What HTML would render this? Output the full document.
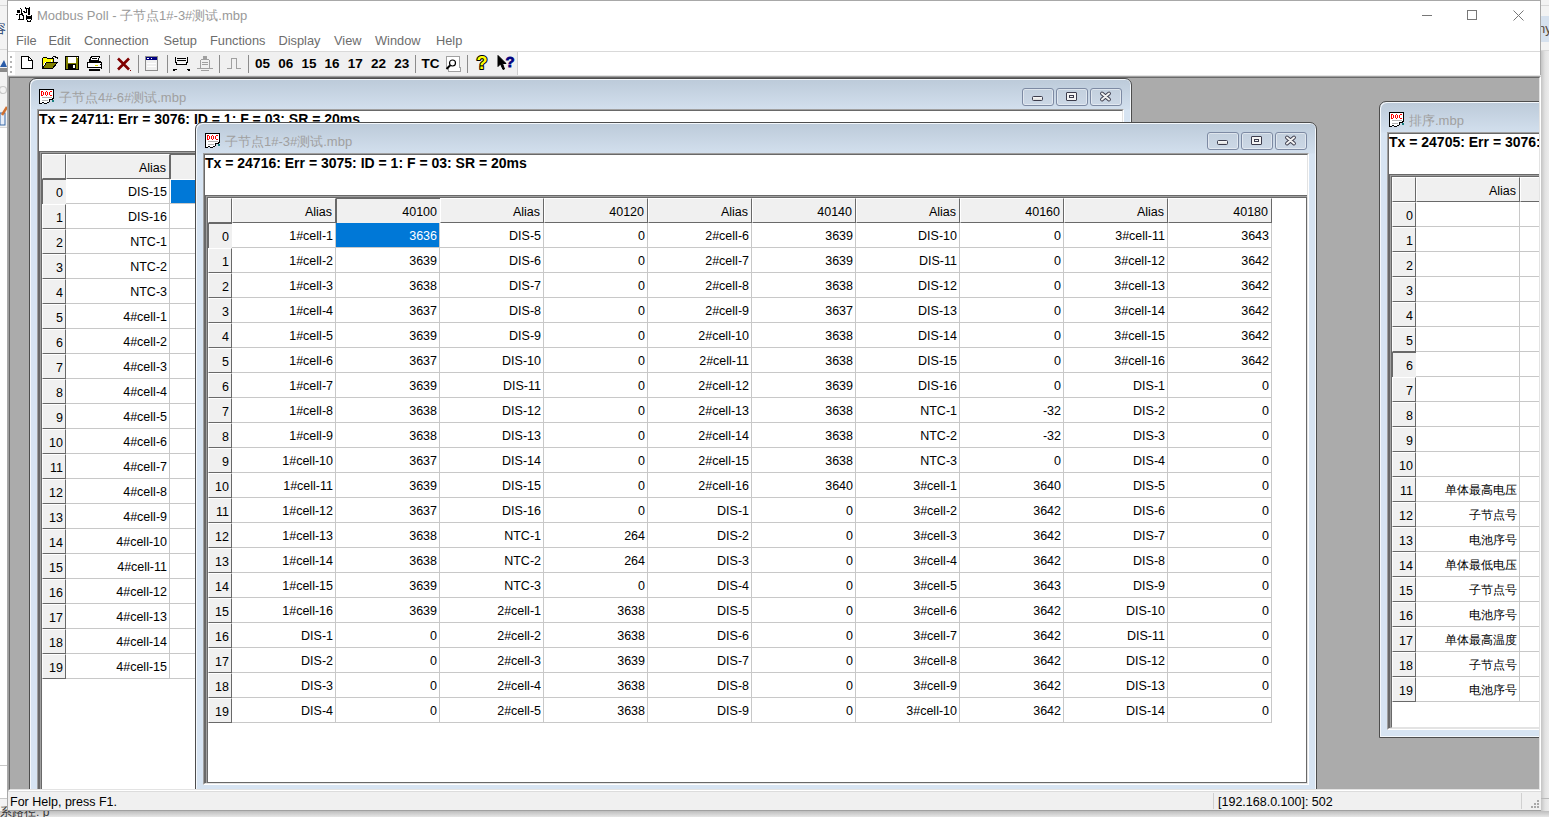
<!DOCTYPE html><html><head><meta charset="utf-8"><style>
*{margin:0;padding:0;box-sizing:border-box}
html,body{width:1549px;height:817px;overflow:hidden;background:#f0f0f0;font-family:"Liberation Sans",sans-serif}
div{position:absolute}
svg{position:absolute;overflow:visible}
.t{white-space:nowrap;line-height:14px}
.c{white-space:nowrap;line-height:14px;font-size:12.5px;color:#000;text-align:right}
.tx{white-space:nowrap;line-height:16px;font-size:14px;font-weight:bold;color:#000}
.btn{border:1px solid #7d8aa3;border-radius:3px;background:linear-gradient(#c3d0de,#ccd8e6);box-shadow:inset 0 0 0 1px rgba(255,255,255,.45)}
</style></head><body>
<div style="left:0px;top:0px;width:1549px;height:817px;background:#f3f3f3"></div>
<div style="left:0px;top:5px;width:7px;height:1px;background:#d8d8d8"></div>
<div style="left:0px;top:49px;width:7px;height:1px;background:#d8d8d8"></div>
<div style="left:0px;top:127px;width:7px;height:1px;background:#d8d8d8"></div>
<div style="left:0px;top:128px;width:7px;height:670px;background:#ffffff"></div>
<div style="left:0px;top:798px;width:7px;height:1px;background:#c8c8c8"></div>
<div style="left:0px;top:765px;width:7px;height:1px;background:#c8c8c8"></div>
<div class="t" style="left:-7px;top:22px;font-size:13px;color:#1a3a6a">容</div>
<svg width="7" height="14" style="left:0;top:59px"><path d="M0 8L4 1L7 8Z" fill="#2a5ca8"/><rect x="0" y="9" width="7" height="4" fill="#8c8c8c"/></svg>
<svg width="7" height="10" style="left:0;top:85px"><circle cx="3" cy="5" r="3.5" fill="none" stroke="#c8c8c8" stroke-width="1.2"/></svg>
<svg width="7" height="20" style="left:0;top:106px"><rect x="0" y="7" width="5" height="12" fill="#e8eef8" stroke="#3a6aa8"/><path d="M2 9L7 1" stroke="#d07030" stroke-width="2.5"/></svg>
<div style="left:1541px;top:5px;width:8px;height:1px;background:#d8d8d8"></div>
<div style="left:1541px;top:16px;width:8px;height:26px;background:#d6e1ee"></div>
<div style="left:1541px;top:50px;width:8px;height:1px;background:#d8d8d8"></div>
<div class="t" style="left:1538px;top:22px;font-size:13px;color:#5a4a3a">ny</div>
<div style="left:0px;top:811px;width:1549px;height:6px;background:linear-gradient(#bdbdbd,#e6e6e6)"></div>
<div class="t" style="left:0px;top:805px;font-size:12px;color:#333">系路径: p</div>
<div style="left:7px;top:0px;width:1534px;height:811px;background:#ffffff;border:1px solid #a8a8a8;border-bottom:none"></div>
<svg width="22" height="18" shape-rendering="crispEdges" style="left:12px;top:4px"><path d="M13 3h1v1h-1zM17 3h1v1h-1zM8 4h1v1h-1zM13 4h1v1h-1zM14 4h1v1h-1zM15 4h1v1h-1zM16 4h1v1h-1zM17 4h1v1h-1zM9 5h1v1h-1zM14 5h1v1h-1zM16 5h1v1h-1zM17 5h1v1h-1zM5 6h1v1h-1zM6 6h1v1h-1zM7 6h1v1h-1zM9 6h1v1h-1zM14 6h1v1h-1zM16 6h1v1h-1zM17 6h1v1h-1zM5 7h1v1h-1zM6 7h1v1h-1zM7 7h1v1h-1zM9 7h1v1h-1zM11 7h1v1h-1zM12 7h1v1h-1zM14 7h1v1h-1zM16 7h1v1h-1zM17 7h1v1h-1zM5 8h1v1h-1zM6 8h1v1h-1zM7 8h1v1h-1zM9 8h1v1h-1zM12 8h1v1h-1zM13 8h1v1h-1zM14 8h1v1h-1zM16 8h1v1h-1zM17 8h1v1h-1zM9 9h1v1h-1zM10 9h1v1h-1zM16 9h1v1h-1zM17 9h1v1h-1zM4 10h1v1h-1zM5 10h1v1h-1zM7 10h1v1h-1zM8 10h1v1h-1zM9 10h1v1h-1zM10 10h1v1h-1zM16 10h1v1h-1zM17 10h1v1h-1zM7 11h1v1h-1zM10 11h1v1h-1zM11 11h1v1h-1zM14 11h1v1h-1zM19 11h1v1h-1zM7 12h1v1h-1zM11 12h1v1h-1zM14 12h1v1h-1zM15 12h1v1h-1zM16 12h1v1h-1zM17 12h1v1h-1zM18 12h1v1h-1zM19 12h1v1h-1zM7 13h1v1h-1zM11 13h1v1h-1zM14 13h1v1h-1zM15 13h1v1h-1zM16 13h1v1h-1zM17 13h1v1h-1zM18 13h1v1h-1zM19 13h1v1h-1zM7 14h1v1h-1zM11 14h1v1h-1zM14 14h1v1h-1zM15 14h1v1h-1zM16 14h1v1h-1zM17 14h1v1h-1zM18 14h1v1h-1zM19 14h1v1h-1zM6 15h1v1h-1zM7 15h1v1h-1zM8 15h1v1h-1zM9 15h1v1h-1zM10 15h1v1h-1zM11 15h1v1h-1zM14 15h1v1h-1zM19 15h1v1h-1zM15 16h1v1h-1zM18 16h1v1h-1zM15 17h1v1h-1zM16 17h1v1h-1zM17 17h1v1h-1zM18 17h1v1h-1z" fill="#000"/></svg>
<div class="t" style="left:37px;top:9px;font-size:13px;color:#999999">Modbus Poll - 子节点1#-3#测试.mbp</div>
<div style="left:1422px;top:15px;width:10px;height:1px;background:#777"></div>
<div style="left:1467px;top:10px;width:10px;height:10px;border:1px solid #777"></div>
<svg width="11" height="11" style="left:1513px;top:10px"><path d="M0.5 0.5L10.5 10.5M10.5 0.5L0.5 10.5" stroke="#777" stroke-width="1"/></svg>
<div class="t" style="left:16px;top:34px;font-size:12.8px;color:#6d6d6d">File</div>
<div class="t" style="left:48.5px;top:34px;font-size:12.8px;color:#6d6d6d">Edit</div>
<div class="t" style="left:84px;top:34px;font-size:12.8px;color:#6d6d6d">Connection</div>
<div class="t" style="left:163.5px;top:34px;font-size:12.8px;color:#6d6d6d">Setup</div>
<div class="t" style="left:210px;top:34px;font-size:12.8px;color:#6d6d6d">Functions</div>
<div class="t" style="left:278.5px;top:34px;font-size:12.8px;color:#6d6d6d">Display</div>
<div class="t" style="left:334px;top:34px;font-size:12.8px;color:#6d6d6d">View</div>
<div class="t" style="left:375px;top:34px;font-size:12.8px;color:#6d6d6d">Window</div>
<div class="t" style="left:436px;top:34px;font-size:12.8px;color:#6d6d6d">Help</div>
<div style="left:8px;top:51px;width:1532px;height:1px;background:#d9d9d9"></div>
<div style="left:8px;top:52px;width:1532px;height:24px;background:#ffffff"></div>
<div style="left:15px;top:52px;width:503px;height:24px;background:#f0f0f0"></div>
<div style="left:517px;top:52px;width:1px;height:24px;background:#d0d0d0"></div>
<div style="left:10px;top:56px;width:2px;height:2px;background:#b4b4b4"></div><div style="left:10px;top:61px;width:2px;height:2px;background:#b4b4b4"></div><div style="left:10px;top:66px;width:2px;height:2px;background:#b4b4b4"></div><div style="left:10px;top:71px;width:2px;height:2px;background:#b4b4b4"></div><svg width="14" height="15" shape-rendering="crispEdges" style="left:20px;top:55px"><path d="M1.5 1.5H8.5L12.5 5.5V13.5H1.5Z" fill="#fff" stroke="#000"/><path d="M8.5 1.5V5.5H12.5" fill="none" stroke="#000"/></svg><svg width="18" height="15" shape-rendering="crispEdges" style="left:41px;top:55px"><path d="M1.5 13.5V3.5L3 2H5.5L6.5 3.5H12.5V6.5" fill="#ffff00" stroke="#000"/><path d="M2 12L5 7H10.5V4.5" fill="none" stroke="#fff" stroke-width="1"/><path d="M1.5 13.5L5.5 7.5H16.5L11.5 13.5Z" fill="#808000" stroke="#000"/><path d="M10.5 3.5Q12.5 0.5 15.5 2.5" fill="none" stroke="#000"/><path d="M14 1.5h3v3z" fill="#000"/></svg><svg width="16" height="16" shape-rendering="crispEdges" style="left:64px;top:55px"><rect x="1" y="1" width="14" height="14" fill="#000"/><rect x="2" y="2" width="12" height="12" fill="#808000"/><rect x="4" y="2" width="8" height="6" fill="#fff"/><rect x="4" y="9" width="8" height="5" fill="#000"/><rect x="9" y="10" width="2" height="3" fill="#fff"/><rect x="13" y="2" width="1" height="1" fill="#fff"/></svg><svg width="18" height="16" shape-rendering="crispEdges" style="left:86px;top:55px"><path d="M5.5 1.5H13.5L12 5.5H3.5Z" fill="#fff" stroke="#000"/><path d="M6 3.5H11" stroke="#000"/><path d="M1.5 7.5H15.5V12.5H1.5Z" fill="#fff" stroke="#000"/><path d="M2.5 5.5H14.5V7.5H2.5Z" fill="#000"/><path d="M3 14.5H13.5" stroke="#000" stroke-width="2"/><rect x="9" y="10" width="3" height="1" fill="#e0e000"/><path d="M14 6L16 8M14 9L16 11M14 12L16 14" stroke="#000"/></svg><div style="left:109px;top:55px;width:1px;height:18px;background:#8c8c8c"></div><div style="left:138px;top:55px;width:1px;height:18px;background:#8c8c8c"></div><div style="left:167px;top:55px;width:1px;height:18px;background:#8c8c8c"></div><div style="left:219px;top:55px;width:1px;height:18px;background:#8c8c8c"></div><div style="left:248px;top:55px;width:1px;height:18px;background:#8c8c8c"></div><div style="left:415px;top:55px;width:1px;height:18px;background:#8c8c8c"></div><div style="left:467px;top:55px;width:1px;height:18px;background:#8c8c8c"></div><svg width="16" height="15" shape-rendering="crispEdges" style="left:116px;top:57px"><path d="M2 1.5L13 12.5M13 1.5L2 12.5" stroke="#800000" stroke-width="2.6" shape-rendering="geometricPrecision"/><rect x="14" y="13" width="1" height="1" fill="#800000"/></svg><svg width="13" height="15" shape-rendering="crispEdges" style="left:145px;top:56px"><rect x="0.5" y="0.5" width="12" height="14" fill="#f0f0f0" stroke="#8c8c8c"/><rect x="1" y="1" width="11" height="3" fill="#000080"/><rect x="2" y="2" width="2" height="1" fill="#fff"/><rect x="6" y="2" width="1" height="1" fill="#fff"/><path d="M2 7.5H11M2 10.5H11" stroke="#fff"/></svg><svg width="18" height="17" shape-rendering="crispEdges" style="left:173px;top:55px"><path d="M2.5 1.5V7.5H3.5V9.5H13.5V7.5H14.5V1.5" fill="none" stroke="#000" stroke-width="1.3"/><path d="M4 3.5H13M4 5.5H13" stroke="#000"/><path d="M5 8.5H12" stroke="#fff"/><path d="M1 16V14.5H3.5M16 16V14.5H13.5" fill="none" stroke="#000" stroke-width="1.2"/></svg><svg width="18" height="17" shape-rendering="crispEdges" style="left:196px;top:55px"><rect x="7" y="1" width="4" height="3" fill="#a0a0a0"/><path d="M4.5 13.5V5.5L5.5 4.5H12.5L13.5 5.5V13.5Z" fill="#f0f0f0" stroke="#a0a0a0" stroke-width="1.3"/><path d="M6 7.5H12M6 9.5H12" stroke="#a0a0a0"/><path d="M1 13.5H17" stroke="#a0a0a0" stroke-width="1.3"/><path d="M5 15.5H13" stroke="#a0a0a0"/></svg><svg width="16" height="13" shape-rendering="crispEdges" style="left:226px;top:57px"><path d="M1 11.5H5.5V1.5H10.5V11.5H15" fill="none" stroke="#a0a0a0"/></svg><div class="t" style="left:255.0px;top:57px;font-size:13.5px;font-weight:bold;color:#000">05</div><div class="t" style="left:278.2px;top:57px;font-size:13.5px;font-weight:bold;color:#000">06</div><div class="t" style="left:301.4px;top:57px;font-size:13.5px;font-weight:bold;color:#000">15</div><div class="t" style="left:324.6px;top:57px;font-size:13.5px;font-weight:bold;color:#000">16</div><div class="t" style="left:347.8px;top:57px;font-size:13.5px;font-weight:bold;color:#000">17</div><div class="t" style="left:371.0px;top:57px;font-size:13.5px;font-weight:bold;color:#000">22</div><div class="t" style="left:394.2px;top:57px;font-size:13.5px;font-weight:bold;color:#000">23</div><div class="t" style="left:421.5px;top:57px;font-size:13.5px;font-weight:bold;color:#000">TC</div><svg width="17" height="17" shape-rendering="crispEdges" style="left:445px;top:56px"><path d="M1.5 0.5H14.5V11.5H15.5V15.5H3.5V11.5H1.5Z" fill="#fff" stroke="#a0a0a0"/><circle cx="7.5" cy="7" r="3" fill="#fff" stroke="#000" stroke-width="1.2" shape-rendering="geometricPrecision"/><path d="M5 9.5L1.5 13" stroke="#000" stroke-width="2" shape-rendering="geometricPrecision"/></svg><svg width="14" height="17" style="left:475px;top:54px"><text x="7" y="15" text-anchor="middle" font-family="Liberation Sans" font-weight="bold" font-size="18" fill="#ffff00" stroke="#000" stroke-width="2.2" paint-order="stroke" stroke-linejoin="round">?</text></svg><svg width="18" height="16" shape-rendering="crispEdges" style="left:497px;top:55px"><path d="M1 0.5V11.5L3.5 9L6 14.5L7.5 14L5.5 8.5H9Z" fill="#000" stroke="#000" stroke-width="1" shape-rendering="geometricPrecision"/></svg><svg width="10" height="17" style="left:505px;top:54px"><text x="5" y="13" text-anchor="middle" font-family="Liberation Sans" font-weight="bold" font-size="15" fill="#000080" stroke="#000080" stroke-width="0.8">?</text></svg>
<div style="left:8px;top:75px;width:1533px;height:1px;background:#e3e3e3"></div>
<div style="left:8px;top:76px;width:1533px;height:715px;background:#ababab;border-top:1px solid #a0a0a0;border-left:1px solid #a0a0a0;border-right:1px solid #fff;border-bottom:1px solid #fff"></div>
<div style="left:9px;top:77px;width:1531px;height:713px;border-top:1px solid #696969;border-left:1px solid #696969;border-right:1px solid #e3e3e3;border-bottom:1px solid #e3e3e3"></div>
<div style="left:10px;top:78px;width:1529px;height:711px;overflow:hidden"><div style="left:-10px;top:-78px;width:1549px;height:817px"><div style="left:0;top:0;width:1549px;height:817px"><div style="left:29px;top:78px;width:1103px;height:740px;border:1px solid #4d4d4d;border-radius:7px 7px 0 0;background:linear-gradient(#bccad9,#d2dfed 30px,#d7e4f2 31px,#d7e4f2);box-shadow:inset 1px 1px 0 #f4f8fc,inset -1px -1px 0 #f4f8fc"></div><svg width="16" height="16" shape-rendering="crispEdges" style="left:39px;top:89px"><path d="M1 0h1v1h-1zM1 1h1v1h-1zM1 2h1v1h-1zM1 3h1v1h-1zM1 4h1v1h-1zM1 5h1v1h-1zM1 6h1v1h-1zM1 7h1v1h-1zM1 8h1v1h-1zM1 9h1v1h-1zM1 10h1v1h-1zM1 11h1v1h-1zM1 12h1v1h-1zM1 13h1v1h-1zM2 0h1v1h-1zM2 1h1v1h-1zM2 2h1v1h-1zM2 3h1v1h-1zM2 4h1v1h-1zM2 5h1v1h-1zM2 6h1v1h-1zM2 7h1v1h-1zM2 8h1v1h-1zM2 9h1v1h-1zM2 10h1v1h-1zM2 11h1v1h-1zM2 12h1v1h-1zM2 13h1v1h-1zM3 0h1v1h-1zM3 1h1v1h-1zM3 2h1v1h-1zM3 3h1v1h-1zM3 4h1v1h-1zM3 5h1v1h-1zM3 6h1v1h-1zM3 7h1v1h-1zM3 8h1v1h-1zM3 9h1v1h-1zM3 10h1v1h-1zM3 11h1v1h-1zM3 12h1v1h-1zM4 0h1v1h-1zM4 1h1v1h-1zM4 2h1v1h-1zM4 3h1v1h-1zM4 4h1v1h-1zM4 5h1v1h-1zM4 6h1v1h-1zM4 7h1v1h-1zM4 8h1v1h-1zM4 9h1v1h-1zM4 10h1v1h-1zM4 11h1v1h-1zM4 12h1v1h-1zM5 0h1v1h-1zM5 1h1v1h-1zM5 2h1v1h-1zM5 3h1v1h-1zM5 4h1v1h-1zM5 5h1v1h-1zM5 6h1v1h-1zM5 7h1v1h-1zM5 8h1v1h-1zM5 9h1v1h-1zM5 10h1v1h-1zM5 11h1v1h-1zM5 12h1v1h-1zM5 13h1v1h-1zM6 0h1v1h-1zM6 1h1v1h-1zM6 2h1v1h-1zM6 3h1v1h-1zM6 4h1v1h-1zM6 5h1v1h-1zM6 6h1v1h-1zM6 7h1v1h-1zM6 8h1v1h-1zM6 9h1v1h-1zM6 10h1v1h-1zM6 11h1v1h-1zM6 12h1v1h-1zM6 13h1v1h-1zM7 0h1v1h-1zM7 1h1v1h-1zM7 2h1v1h-1zM7 3h1v1h-1zM7 4h1v1h-1zM7 5h1v1h-1zM7 6h1v1h-1zM7 7h1v1h-1zM7 8h1v1h-1zM7 9h1v1h-1zM7 10h1v1h-1zM7 11h1v1h-1zM7 12h1v1h-1zM7 13h1v1h-1zM8 0h1v1h-1zM8 1h1v1h-1zM8 2h1v1h-1zM8 3h1v1h-1zM8 4h1v1h-1zM8 5h1v1h-1zM8 6h1v1h-1zM8 7h1v1h-1zM8 8h1v1h-1zM8 9h1v1h-1zM8 10h1v1h-1zM8 11h1v1h-1zM8 12h1v1h-1zM9 0h1v1h-1zM9 1h1v1h-1zM9 2h1v1h-1zM9 3h1v1h-1zM9 4h1v1h-1zM9 5h1v1h-1zM9 6h1v1h-1zM9 7h1v1h-1zM9 8h1v1h-1zM9 9h1v1h-1zM9 10h1v1h-1zM9 11h1v1h-1zM9 12h1v1h-1zM10 0h1v1h-1zM10 1h1v1h-1zM10 2h1v1h-1zM10 3h1v1h-1zM10 4h1v1h-1zM10 5h1v1h-1zM10 6h1v1h-1zM10 7h1v1h-1zM10 8h1v1h-1zM10 9h1v1h-1zM11 0h1v1h-1zM11 1h1v1h-1zM11 2h1v1h-1zM11 3h1v1h-1zM11 4h1v1h-1zM11 5h1v1h-1zM11 6h1v1h-1zM11 7h1v1h-1zM11 8h1v1h-1zM11 9h1v1h-1zM12 0h1v1h-1zM12 1h1v1h-1zM12 2h1v1h-1zM12 3h1v1h-1zM12 4h1v1h-1zM12 5h1v1h-1zM12 6h1v1h-1zM12 7h1v1h-1zM12 8h1v1h-1zM12 9h1v1h-1zM13 0h1v1h-1zM13 1h1v1h-1zM13 2h1v1h-1zM13 3h1v1h-1zM13 4h1v1h-1zM13 5h1v1h-1zM13 6h1v1h-1zM13 7h1v1h-1zM13 8h1v1h-1z" fill="#fff"/><path d="M0 0h1v1h-1zM1 0h1v1h-1zM2 0h1v1h-1zM3 0h1v1h-1zM4 0h1v1h-1zM5 0h1v1h-1zM6 0h1v1h-1zM7 0h1v1h-1zM8 0h1v1h-1zM9 0h1v1h-1zM10 0h1v1h-1zM11 0h1v1h-1zM12 0h1v1h-1zM13 0h1v1h-1zM14 0h1v1h-1zM0 1h1v1h-1zM0 2h1v1h-1zM0 3h1v1h-1zM0 4h1v1h-1zM0 5h1v1h-1zM0 6h1v1h-1zM0 7h1v1h-1zM0 8h1v1h-1zM0 9h1v1h-1zM0 10h1v1h-1zM0 11h1v1h-1zM0 12h1v1h-1zM0 13h1v1h-1zM0 14h1v1h-1zM14 1h1v1h-1zM14 2h1v1h-1zM14 3h1v1h-1zM14 4h1v1h-1zM14 5h1v1h-1zM14 6h1v1h-1zM14 7h1v1h-1zM14 8h1v1h-1zM14 9h1v1h-1zM13 9h1v1h-1zM10 10h1v1h-1zM11 10h1v1h-1zM12 10h1v1h-1zM13 10h1v1h-1zM10 11h1v1h-1zM10 12h1v1h-1zM3 13h1v1h-1zM4 13h1v1h-1zM8 13h1v1h-1zM9 13h1v1h-1zM0 14h1v1h-1zM1 14h1v1h-1zM2 14h1v1h-1zM5 14h1v1h-1zM6 14h1v1h-1zM7 14h1v1h-1z" fill="#000"/><path d="M2 2h1v1h-1zM2 3h1v1h-1zM2 4h1v1h-1zM2 5h1v1h-1zM2 6h1v1h-1zM3 2h1v1h-1zM3 6h1v1h-1zM4 3h1v1h-1zM4 4h1v1h-1zM4 5h1v1h-1zM6 3h1v1h-1zM6 4h1v1h-1zM6 5h1v1h-1zM7 2h1v1h-1zM7 6h1v1h-1zM8 3h1v1h-1zM8 4h1v1h-1zM8 5h1v1h-1zM10 3h1v1h-1zM10 4h1v1h-1zM10 5h1v1h-1zM11 2h1v1h-1zM12 2h1v1h-1zM11 6h1v1h-1zM12 6h1v1h-1z" fill="#ff0000"/><path d="M3 8h1v1h-1zM4 8h1v1h-1zM5 8h1v1h-1zM6 8h1v1h-1zM7 8h1v1h-1zM8 8h1v1h-1zM9 8h1v1h-1zM10 8h1v1h-1zM11 8h1v1h-1zM12 8h1v1h-1zM3 11h1v1h-1zM4 11h1v1h-1zM5 11h1v1h-1zM6 11h1v1h-1zM7 11h1v1h-1zM8 11h1v1h-1z" fill="#b4b4b4"/><path d="M13 11h1v1h-1zM14 11h1v1h-1zM13 12h1v1h-1zM14 12h1v1h-1z" fill="#1a8080"/></svg><div class="t" style="left:59px;top:91px;font-size:13px;color:#a0a0a0">子节点4#-6#测试.mbp</div><div class="btn" style="left:1022px;top:88px;width:32px;height:18px;"></div><div style="left:1032px;top:96px;width:11px;height:5px;background:linear-gradient(#fafafa,#dcdcdc);border:1px solid #3c3c4c;border-radius:1.5px"></div><div class="btn" style="left:1056px;top:88px;width:32px;height:18px;"></div><div style="left:1066px;top:92px;width:11px;height:9px;background:#f4f4f4;border:1px solid #3c3c4c;border-radius:1px"></div><div style="left:1069px;top:95px;width:5px;height:3px;border:1px solid #3c3c4c"></div><div class="btn" style="left:1090px;top:88px;width:32px;height:18px;"></div><svg width="11" height="9" style="left:1100px;top:92px"><path d="M2 1.5L9 7.5M9 1.5L2 7.5" stroke="#3c3c4c" stroke-width="3.8" stroke-linecap="round"/><path d="M2 1.5L9 7.5M9 1.5L2 7.5" stroke="#f2f2f2" stroke-width="2" stroke-linecap="round"/></svg><div style="left:37px;top:109px;width:1087px;height:701px;background:#fff;border-top:1px solid #a0a0a0;border-left:1px solid #a0a0a0;border-right:1px solid #fff;border-bottom:1px solid #fff"></div><div style="left:38px;top:110px;width:1085px;height:699px;background:#fff;border-top:1px solid #696969;border-left:1px solid #696969;border-right:1px solid #e3e3e3;border-bottom:1px solid #e3e3e3"></div><div class="tx" style="left:39px;top:111px">Tx = 24711: Err = 3076: ID = 1: F = 03: SR = 20ms</div><div style="left:39px;top:151px;width:1083px;height:657px;border-top:1px solid #696969;border-left:1px solid #696969"></div><div style="left:40px;top:152px;width:1082px;height:656px;border-top:1px solid #a0a0a0;border-left:1px solid #a0a0a0"></div><div style="left:41px;top:153px;width:1081px;height:655px;border-top:1px solid #696969;border-left:1px solid #696969;border-right:1px solid #e3e3e3;border-bottom:1px solid #e3e3e3"></div><div style="left:42px;top:154px;width:24px;height:25px;background:#f0f0f0;border-top:1px solid #fff;border-left:1px solid #fff;border-right:1px solid #696969;border-bottom:1px solid #696969"></div><div style="left:66px;top:154px;width:104px;height:25px;background:#f0f0f0;border-top:1px solid #fff;border-left:1px solid #fff;border-right:1px solid #696969;border-bottom:1px solid #696969"><div class="c" style="right:3px;top:6px">Alias</div></div><div style="left:170px;top:154px;width:104px;height:25px;background:#f0f0f0;border-top:1px solid #696969;border-left:1px solid #696969"></div><div style="left:274px;top:154px;width:104px;height:25px;background:#f0f0f0;border-top:1px solid #fff;border-left:1px solid #fff;border-right:1px solid #696969;border-bottom:1px solid #696969"><div class="c" style="right:3px;top:6px">Alias</div></div><div style="left:378px;top:154px;width:104px;height:25px;background:#f0f0f0;border-top:1px solid #fff;border-left:1px solid #fff;border-right:1px solid #696969;border-bottom:1px solid #696969"></div><div style="left:482px;top:154px;width:104px;height:25px;background:#f0f0f0;border-top:1px solid #fff;border-left:1px solid #fff;border-right:1px solid #696969;border-bottom:1px solid #696969"></div><div style="left:586px;top:154px;width:104px;height:25px;background:#f0f0f0;border-top:1px solid #fff;border-left:1px solid #fff;border-right:1px solid #696969;border-bottom:1px solid #696969"></div><div style="left:690px;top:154px;width:104px;height:25px;background:#f0f0f0;border-top:1px solid #fff;border-left:1px solid #fff;border-right:1px solid #696969;border-bottom:1px solid #696969"></div><div style="left:794px;top:154px;width:104px;height:25px;background:#f0f0f0;border-top:1px solid #fff;border-left:1px solid #fff;border-right:1px solid #696969;border-bottom:1px solid #696969"></div><div style="left:898px;top:154px;width:104px;height:25px;background:#f0f0f0;border-top:1px solid #fff;border-left:1px solid #fff;border-right:1px solid #696969;border-bottom:1px solid #696969"></div><div style="left:1002px;top:154px;width:104px;height:25px;background:#f0f0f0;border-top:1px solid #fff;border-left:1px solid #fff;border-right:1px solid #696969;border-bottom:1px solid #696969"></div><div style="left:42px;top:179px;width:24px;height:25px;background:#f0f0f0;border-top:1px solid #696969;border-left:1px solid #696969"><div class="c" style="right:3px;top:6px">0</div></div><div style="left:66px;top:179px;width:104px;height:25px;background:#fff;border-right:1px solid #c8c8c8;border-bottom:1px solid #c8c8c8"><div class="c" style="right:2px;top:6px;">DIS-15</div></div><div style="left:170px;top:179px;width:104px;height:25px;background:#0078d7;border-right:1px solid #c8c8c8;border-bottom:1px solid #c8c8c8;box-shadow:inset 1px 1px 0 #fff"></div><div style="left:274px;top:179px;width:104px;height:25px;background:#fff;border-right:1px solid #c8c8c8;border-bottom:1px solid #c8c8c8"></div><div style="left:378px;top:179px;width:104px;height:25px;background:#fff;border-right:1px solid #c8c8c8;border-bottom:1px solid #c8c8c8"></div><div style="left:482px;top:179px;width:104px;height:25px;background:#fff;border-right:1px solid #c8c8c8;border-bottom:1px solid #c8c8c8"></div><div style="left:586px;top:179px;width:104px;height:25px;background:#fff;border-right:1px solid #c8c8c8;border-bottom:1px solid #c8c8c8"></div><div style="left:690px;top:179px;width:104px;height:25px;background:#fff;border-right:1px solid #c8c8c8;border-bottom:1px solid #c8c8c8"></div><div style="left:794px;top:179px;width:104px;height:25px;background:#fff;border-right:1px solid #c8c8c8;border-bottom:1px solid #c8c8c8"></div><div style="left:898px;top:179px;width:104px;height:25px;background:#fff;border-right:1px solid #c8c8c8;border-bottom:1px solid #c8c8c8"></div><div style="left:1002px;top:179px;width:104px;height:25px;background:#fff;border-right:1px solid #c8c8c8;border-bottom:1px solid #c8c8c8"></div><div style="left:42px;top:204px;width:24px;height:25px;background:#f0f0f0;border-top:1px solid #fff;border-left:1px solid #fff;border-right:1px solid #696969;border-bottom:1px solid #696969"><div class="c" style="right:2px;top:6px">1</div></div><div style="left:66px;top:204px;width:104px;height:25px;background:#fff;border-right:1px solid #c8c8c8;border-bottom:1px solid #c8c8c8"><div class="c" style="right:2px;top:6px;">DIS-16</div></div><div style="left:170px;top:204px;width:104px;height:25px;background:#fff;border-right:1px solid #c8c8c8;border-bottom:1px solid #c8c8c8"></div><div style="left:274px;top:204px;width:104px;height:25px;background:#fff;border-right:1px solid #c8c8c8;border-bottom:1px solid #c8c8c8"></div><div style="left:378px;top:204px;width:104px;height:25px;background:#fff;border-right:1px solid #c8c8c8;border-bottom:1px solid #c8c8c8"></div><div style="left:482px;top:204px;width:104px;height:25px;background:#fff;border-right:1px solid #c8c8c8;border-bottom:1px solid #c8c8c8"></div><div style="left:586px;top:204px;width:104px;height:25px;background:#fff;border-right:1px solid #c8c8c8;border-bottom:1px solid #c8c8c8"></div><div style="left:690px;top:204px;width:104px;height:25px;background:#fff;border-right:1px solid #c8c8c8;border-bottom:1px solid #c8c8c8"></div><div style="left:794px;top:204px;width:104px;height:25px;background:#fff;border-right:1px solid #c8c8c8;border-bottom:1px solid #c8c8c8"></div><div style="left:898px;top:204px;width:104px;height:25px;background:#fff;border-right:1px solid #c8c8c8;border-bottom:1px solid #c8c8c8"></div><div style="left:1002px;top:204px;width:104px;height:25px;background:#fff;border-right:1px solid #c8c8c8;border-bottom:1px solid #c8c8c8"></div><div style="left:42px;top:229px;width:24px;height:25px;background:#f0f0f0;border-top:1px solid #fff;border-left:1px solid #fff;border-right:1px solid #696969;border-bottom:1px solid #696969"><div class="c" style="right:2px;top:6px">2</div></div><div style="left:66px;top:229px;width:104px;height:25px;background:#fff;border-right:1px solid #c8c8c8;border-bottom:1px solid #c8c8c8"><div class="c" style="right:2px;top:6px;">NTC-1</div></div><div style="left:170px;top:229px;width:104px;height:25px;background:#fff;border-right:1px solid #c8c8c8;border-bottom:1px solid #c8c8c8"></div><div style="left:274px;top:229px;width:104px;height:25px;background:#fff;border-right:1px solid #c8c8c8;border-bottom:1px solid #c8c8c8"></div><div style="left:378px;top:229px;width:104px;height:25px;background:#fff;border-right:1px solid #c8c8c8;border-bottom:1px solid #c8c8c8"></div><div style="left:482px;top:229px;width:104px;height:25px;background:#fff;border-right:1px solid #c8c8c8;border-bottom:1px solid #c8c8c8"></div><div style="left:586px;top:229px;width:104px;height:25px;background:#fff;border-right:1px solid #c8c8c8;border-bottom:1px solid #c8c8c8"></div><div style="left:690px;top:229px;width:104px;height:25px;background:#fff;border-right:1px solid #c8c8c8;border-bottom:1px solid #c8c8c8"></div><div style="left:794px;top:229px;width:104px;height:25px;background:#fff;border-right:1px solid #c8c8c8;border-bottom:1px solid #c8c8c8"></div><div style="left:898px;top:229px;width:104px;height:25px;background:#fff;border-right:1px solid #c8c8c8;border-bottom:1px solid #c8c8c8"></div><div style="left:1002px;top:229px;width:104px;height:25px;background:#fff;border-right:1px solid #c8c8c8;border-bottom:1px solid #c8c8c8"></div><div style="left:42px;top:254px;width:24px;height:25px;background:#f0f0f0;border-top:1px solid #fff;border-left:1px solid #fff;border-right:1px solid #696969;border-bottom:1px solid #696969"><div class="c" style="right:2px;top:6px">3</div></div><div style="left:66px;top:254px;width:104px;height:25px;background:#fff;border-right:1px solid #c8c8c8;border-bottom:1px solid #c8c8c8"><div class="c" style="right:2px;top:6px;">NTC-2</div></div><div style="left:170px;top:254px;width:104px;height:25px;background:#fff;border-right:1px solid #c8c8c8;border-bottom:1px solid #c8c8c8"></div><div style="left:274px;top:254px;width:104px;height:25px;background:#fff;border-right:1px solid #c8c8c8;border-bottom:1px solid #c8c8c8"></div><div style="left:378px;top:254px;width:104px;height:25px;background:#fff;border-right:1px solid #c8c8c8;border-bottom:1px solid #c8c8c8"></div><div style="left:482px;top:254px;width:104px;height:25px;background:#fff;border-right:1px solid #c8c8c8;border-bottom:1px solid #c8c8c8"></div><div style="left:586px;top:254px;width:104px;height:25px;background:#fff;border-right:1px solid #c8c8c8;border-bottom:1px solid #c8c8c8"></div><div style="left:690px;top:254px;width:104px;height:25px;background:#fff;border-right:1px solid #c8c8c8;border-bottom:1px solid #c8c8c8"></div><div style="left:794px;top:254px;width:104px;height:25px;background:#fff;border-right:1px solid #c8c8c8;border-bottom:1px solid #c8c8c8"></div><div style="left:898px;top:254px;width:104px;height:25px;background:#fff;border-right:1px solid #c8c8c8;border-bottom:1px solid #c8c8c8"></div><div style="left:1002px;top:254px;width:104px;height:25px;background:#fff;border-right:1px solid #c8c8c8;border-bottom:1px solid #c8c8c8"></div><div style="left:42px;top:279px;width:24px;height:25px;background:#f0f0f0;border-top:1px solid #fff;border-left:1px solid #fff;border-right:1px solid #696969;border-bottom:1px solid #696969"><div class="c" style="right:2px;top:6px">4</div></div><div style="left:66px;top:279px;width:104px;height:25px;background:#fff;border-right:1px solid #c8c8c8;border-bottom:1px solid #c8c8c8"><div class="c" style="right:2px;top:6px;">NTC-3</div></div><div style="left:170px;top:279px;width:104px;height:25px;background:#fff;border-right:1px solid #c8c8c8;border-bottom:1px solid #c8c8c8"></div><div style="left:274px;top:279px;width:104px;height:25px;background:#fff;border-right:1px solid #c8c8c8;border-bottom:1px solid #c8c8c8"></div><div style="left:378px;top:279px;width:104px;height:25px;background:#fff;border-right:1px solid #c8c8c8;border-bottom:1px solid #c8c8c8"></div><div style="left:482px;top:279px;width:104px;height:25px;background:#fff;border-right:1px solid #c8c8c8;border-bottom:1px solid #c8c8c8"></div><div style="left:586px;top:279px;width:104px;height:25px;background:#fff;border-right:1px solid #c8c8c8;border-bottom:1px solid #c8c8c8"></div><div style="left:690px;top:279px;width:104px;height:25px;background:#fff;border-right:1px solid #c8c8c8;border-bottom:1px solid #c8c8c8"></div><div style="left:794px;top:279px;width:104px;height:25px;background:#fff;border-right:1px solid #c8c8c8;border-bottom:1px solid #c8c8c8"></div><div style="left:898px;top:279px;width:104px;height:25px;background:#fff;border-right:1px solid #c8c8c8;border-bottom:1px solid #c8c8c8"></div><div style="left:1002px;top:279px;width:104px;height:25px;background:#fff;border-right:1px solid #c8c8c8;border-bottom:1px solid #c8c8c8"></div><div style="left:42px;top:304px;width:24px;height:25px;background:#f0f0f0;border-top:1px solid #fff;border-left:1px solid #fff;border-right:1px solid #696969;border-bottom:1px solid #696969"><div class="c" style="right:2px;top:6px">5</div></div><div style="left:66px;top:304px;width:104px;height:25px;background:#fff;border-right:1px solid #c8c8c8;border-bottom:1px solid #c8c8c8"><div class="c" style="right:2px;top:6px;">4#cell-1</div></div><div style="left:170px;top:304px;width:104px;height:25px;background:#fff;border-right:1px solid #c8c8c8;border-bottom:1px solid #c8c8c8"></div><div style="left:274px;top:304px;width:104px;height:25px;background:#fff;border-right:1px solid #c8c8c8;border-bottom:1px solid #c8c8c8"></div><div style="left:378px;top:304px;width:104px;height:25px;background:#fff;border-right:1px solid #c8c8c8;border-bottom:1px solid #c8c8c8"></div><div style="left:482px;top:304px;width:104px;height:25px;background:#fff;border-right:1px solid #c8c8c8;border-bottom:1px solid #c8c8c8"></div><div style="left:586px;top:304px;width:104px;height:25px;background:#fff;border-right:1px solid #c8c8c8;border-bottom:1px solid #c8c8c8"></div><div style="left:690px;top:304px;width:104px;height:25px;background:#fff;border-right:1px solid #c8c8c8;border-bottom:1px solid #c8c8c8"></div><div style="left:794px;top:304px;width:104px;height:25px;background:#fff;border-right:1px solid #c8c8c8;border-bottom:1px solid #c8c8c8"></div><div style="left:898px;top:304px;width:104px;height:25px;background:#fff;border-right:1px solid #c8c8c8;border-bottom:1px solid #c8c8c8"></div><div style="left:1002px;top:304px;width:104px;height:25px;background:#fff;border-right:1px solid #c8c8c8;border-bottom:1px solid #c8c8c8"></div><div style="left:42px;top:329px;width:24px;height:25px;background:#f0f0f0;border-top:1px solid #fff;border-left:1px solid #fff;border-right:1px solid #696969;border-bottom:1px solid #696969"><div class="c" style="right:2px;top:6px">6</div></div><div style="left:66px;top:329px;width:104px;height:25px;background:#fff;border-right:1px solid #c8c8c8;border-bottom:1px solid #c8c8c8"><div class="c" style="right:2px;top:6px;">4#cell-2</div></div><div style="left:170px;top:329px;width:104px;height:25px;background:#fff;border-right:1px solid #c8c8c8;border-bottom:1px solid #c8c8c8"></div><div style="left:274px;top:329px;width:104px;height:25px;background:#fff;border-right:1px solid #c8c8c8;border-bottom:1px solid #c8c8c8"></div><div style="left:378px;top:329px;width:104px;height:25px;background:#fff;border-right:1px solid #c8c8c8;border-bottom:1px solid #c8c8c8"></div><div style="left:482px;top:329px;width:104px;height:25px;background:#fff;border-right:1px solid #c8c8c8;border-bottom:1px solid #c8c8c8"></div><div style="left:586px;top:329px;width:104px;height:25px;background:#fff;border-right:1px solid #c8c8c8;border-bottom:1px solid #c8c8c8"></div><div style="left:690px;top:329px;width:104px;height:25px;background:#fff;border-right:1px solid #c8c8c8;border-bottom:1px solid #c8c8c8"></div><div style="left:794px;top:329px;width:104px;height:25px;background:#fff;border-right:1px solid #c8c8c8;border-bottom:1px solid #c8c8c8"></div><div style="left:898px;top:329px;width:104px;height:25px;background:#fff;border-right:1px solid #c8c8c8;border-bottom:1px solid #c8c8c8"></div><div style="left:1002px;top:329px;width:104px;height:25px;background:#fff;border-right:1px solid #c8c8c8;border-bottom:1px solid #c8c8c8"></div><div style="left:42px;top:354px;width:24px;height:25px;background:#f0f0f0;border-top:1px solid #fff;border-left:1px solid #fff;border-right:1px solid #696969;border-bottom:1px solid #696969"><div class="c" style="right:2px;top:6px">7</div></div><div style="left:66px;top:354px;width:104px;height:25px;background:#fff;border-right:1px solid #c8c8c8;border-bottom:1px solid #c8c8c8"><div class="c" style="right:2px;top:6px;">4#cell-3</div></div><div style="left:170px;top:354px;width:104px;height:25px;background:#fff;border-right:1px solid #c8c8c8;border-bottom:1px solid #c8c8c8"></div><div style="left:274px;top:354px;width:104px;height:25px;background:#fff;border-right:1px solid #c8c8c8;border-bottom:1px solid #c8c8c8"></div><div style="left:378px;top:354px;width:104px;height:25px;background:#fff;border-right:1px solid #c8c8c8;border-bottom:1px solid #c8c8c8"></div><div style="left:482px;top:354px;width:104px;height:25px;background:#fff;border-right:1px solid #c8c8c8;border-bottom:1px solid #c8c8c8"></div><div style="left:586px;top:354px;width:104px;height:25px;background:#fff;border-right:1px solid #c8c8c8;border-bottom:1px solid #c8c8c8"></div><div style="left:690px;top:354px;width:104px;height:25px;background:#fff;border-right:1px solid #c8c8c8;border-bottom:1px solid #c8c8c8"></div><div style="left:794px;top:354px;width:104px;height:25px;background:#fff;border-right:1px solid #c8c8c8;border-bottom:1px solid #c8c8c8"></div><div style="left:898px;top:354px;width:104px;height:25px;background:#fff;border-right:1px solid #c8c8c8;border-bottom:1px solid #c8c8c8"></div><div style="left:1002px;top:354px;width:104px;height:25px;background:#fff;border-right:1px solid #c8c8c8;border-bottom:1px solid #c8c8c8"></div><div style="left:42px;top:379px;width:24px;height:25px;background:#f0f0f0;border-top:1px solid #fff;border-left:1px solid #fff;border-right:1px solid #696969;border-bottom:1px solid #696969"><div class="c" style="right:2px;top:6px">8</div></div><div style="left:66px;top:379px;width:104px;height:25px;background:#fff;border-right:1px solid #c8c8c8;border-bottom:1px solid #c8c8c8"><div class="c" style="right:2px;top:6px;">4#cell-4</div></div><div style="left:170px;top:379px;width:104px;height:25px;background:#fff;border-right:1px solid #c8c8c8;border-bottom:1px solid #c8c8c8"></div><div style="left:274px;top:379px;width:104px;height:25px;background:#fff;border-right:1px solid #c8c8c8;border-bottom:1px solid #c8c8c8"></div><div style="left:378px;top:379px;width:104px;height:25px;background:#fff;border-right:1px solid #c8c8c8;border-bottom:1px solid #c8c8c8"></div><div style="left:482px;top:379px;width:104px;height:25px;background:#fff;border-right:1px solid #c8c8c8;border-bottom:1px solid #c8c8c8"></div><div style="left:586px;top:379px;width:104px;height:25px;background:#fff;border-right:1px solid #c8c8c8;border-bottom:1px solid #c8c8c8"></div><div style="left:690px;top:379px;width:104px;height:25px;background:#fff;border-right:1px solid #c8c8c8;border-bottom:1px solid #c8c8c8"></div><div style="left:794px;top:379px;width:104px;height:25px;background:#fff;border-right:1px solid #c8c8c8;border-bottom:1px solid #c8c8c8"></div><div style="left:898px;top:379px;width:104px;height:25px;background:#fff;border-right:1px solid #c8c8c8;border-bottom:1px solid #c8c8c8"></div><div style="left:1002px;top:379px;width:104px;height:25px;background:#fff;border-right:1px solid #c8c8c8;border-bottom:1px solid #c8c8c8"></div><div style="left:42px;top:404px;width:24px;height:25px;background:#f0f0f0;border-top:1px solid #fff;border-left:1px solid #fff;border-right:1px solid #696969;border-bottom:1px solid #696969"><div class="c" style="right:2px;top:6px">9</div></div><div style="left:66px;top:404px;width:104px;height:25px;background:#fff;border-right:1px solid #c8c8c8;border-bottom:1px solid #c8c8c8"><div class="c" style="right:2px;top:6px;">4#cell-5</div></div><div style="left:170px;top:404px;width:104px;height:25px;background:#fff;border-right:1px solid #c8c8c8;border-bottom:1px solid #c8c8c8"></div><div style="left:274px;top:404px;width:104px;height:25px;background:#fff;border-right:1px solid #c8c8c8;border-bottom:1px solid #c8c8c8"></div><div style="left:378px;top:404px;width:104px;height:25px;background:#fff;border-right:1px solid #c8c8c8;border-bottom:1px solid #c8c8c8"></div><div style="left:482px;top:404px;width:104px;height:25px;background:#fff;border-right:1px solid #c8c8c8;border-bottom:1px solid #c8c8c8"></div><div style="left:586px;top:404px;width:104px;height:25px;background:#fff;border-right:1px solid #c8c8c8;border-bottom:1px solid #c8c8c8"></div><div style="left:690px;top:404px;width:104px;height:25px;background:#fff;border-right:1px solid #c8c8c8;border-bottom:1px solid #c8c8c8"></div><div style="left:794px;top:404px;width:104px;height:25px;background:#fff;border-right:1px solid #c8c8c8;border-bottom:1px solid #c8c8c8"></div><div style="left:898px;top:404px;width:104px;height:25px;background:#fff;border-right:1px solid #c8c8c8;border-bottom:1px solid #c8c8c8"></div><div style="left:1002px;top:404px;width:104px;height:25px;background:#fff;border-right:1px solid #c8c8c8;border-bottom:1px solid #c8c8c8"></div><div style="left:42px;top:429px;width:24px;height:25px;background:#f0f0f0;border-top:1px solid #fff;border-left:1px solid #fff;border-right:1px solid #696969;border-bottom:1px solid #696969"><div class="c" style="right:2px;top:6px">10</div></div><div style="left:66px;top:429px;width:104px;height:25px;background:#fff;border-right:1px solid #c8c8c8;border-bottom:1px solid #c8c8c8"><div class="c" style="right:2px;top:6px;">4#cell-6</div></div><div style="left:170px;top:429px;width:104px;height:25px;background:#fff;border-right:1px solid #c8c8c8;border-bottom:1px solid #c8c8c8"></div><div style="left:274px;top:429px;width:104px;height:25px;background:#fff;border-right:1px solid #c8c8c8;border-bottom:1px solid #c8c8c8"></div><div style="left:378px;top:429px;width:104px;height:25px;background:#fff;border-right:1px solid #c8c8c8;border-bottom:1px solid #c8c8c8"></div><div style="left:482px;top:429px;width:104px;height:25px;background:#fff;border-right:1px solid #c8c8c8;border-bottom:1px solid #c8c8c8"></div><div style="left:586px;top:429px;width:104px;height:25px;background:#fff;border-right:1px solid #c8c8c8;border-bottom:1px solid #c8c8c8"></div><div style="left:690px;top:429px;width:104px;height:25px;background:#fff;border-right:1px solid #c8c8c8;border-bottom:1px solid #c8c8c8"></div><div style="left:794px;top:429px;width:104px;height:25px;background:#fff;border-right:1px solid #c8c8c8;border-bottom:1px solid #c8c8c8"></div><div style="left:898px;top:429px;width:104px;height:25px;background:#fff;border-right:1px solid #c8c8c8;border-bottom:1px solid #c8c8c8"></div><div style="left:1002px;top:429px;width:104px;height:25px;background:#fff;border-right:1px solid #c8c8c8;border-bottom:1px solid #c8c8c8"></div><div style="left:42px;top:454px;width:24px;height:25px;background:#f0f0f0;border-top:1px solid #fff;border-left:1px solid #fff;border-right:1px solid #696969;border-bottom:1px solid #696969"><div class="c" style="right:2px;top:6px">11</div></div><div style="left:66px;top:454px;width:104px;height:25px;background:#fff;border-right:1px solid #c8c8c8;border-bottom:1px solid #c8c8c8"><div class="c" style="right:2px;top:6px;">4#cell-7</div></div><div style="left:170px;top:454px;width:104px;height:25px;background:#fff;border-right:1px solid #c8c8c8;border-bottom:1px solid #c8c8c8"></div><div style="left:274px;top:454px;width:104px;height:25px;background:#fff;border-right:1px solid #c8c8c8;border-bottom:1px solid #c8c8c8"></div><div style="left:378px;top:454px;width:104px;height:25px;background:#fff;border-right:1px solid #c8c8c8;border-bottom:1px solid #c8c8c8"></div><div style="left:482px;top:454px;width:104px;height:25px;background:#fff;border-right:1px solid #c8c8c8;border-bottom:1px solid #c8c8c8"></div><div style="left:586px;top:454px;width:104px;height:25px;background:#fff;border-right:1px solid #c8c8c8;border-bottom:1px solid #c8c8c8"></div><div style="left:690px;top:454px;width:104px;height:25px;background:#fff;border-right:1px solid #c8c8c8;border-bottom:1px solid #c8c8c8"></div><div style="left:794px;top:454px;width:104px;height:25px;background:#fff;border-right:1px solid #c8c8c8;border-bottom:1px solid #c8c8c8"></div><div style="left:898px;top:454px;width:104px;height:25px;background:#fff;border-right:1px solid #c8c8c8;border-bottom:1px solid #c8c8c8"></div><div style="left:1002px;top:454px;width:104px;height:25px;background:#fff;border-right:1px solid #c8c8c8;border-bottom:1px solid #c8c8c8"></div><div style="left:42px;top:479px;width:24px;height:25px;background:#f0f0f0;border-top:1px solid #fff;border-left:1px solid #fff;border-right:1px solid #696969;border-bottom:1px solid #696969"><div class="c" style="right:2px;top:6px">12</div></div><div style="left:66px;top:479px;width:104px;height:25px;background:#fff;border-right:1px solid #c8c8c8;border-bottom:1px solid #c8c8c8"><div class="c" style="right:2px;top:6px;">4#cell-8</div></div><div style="left:170px;top:479px;width:104px;height:25px;background:#fff;border-right:1px solid #c8c8c8;border-bottom:1px solid #c8c8c8"></div><div style="left:274px;top:479px;width:104px;height:25px;background:#fff;border-right:1px solid #c8c8c8;border-bottom:1px solid #c8c8c8"></div><div style="left:378px;top:479px;width:104px;height:25px;background:#fff;border-right:1px solid #c8c8c8;border-bottom:1px solid #c8c8c8"></div><div style="left:482px;top:479px;width:104px;height:25px;background:#fff;border-right:1px solid #c8c8c8;border-bottom:1px solid #c8c8c8"></div><div style="left:586px;top:479px;width:104px;height:25px;background:#fff;border-right:1px solid #c8c8c8;border-bottom:1px solid #c8c8c8"></div><div style="left:690px;top:479px;width:104px;height:25px;background:#fff;border-right:1px solid #c8c8c8;border-bottom:1px solid #c8c8c8"></div><div style="left:794px;top:479px;width:104px;height:25px;background:#fff;border-right:1px solid #c8c8c8;border-bottom:1px solid #c8c8c8"></div><div style="left:898px;top:479px;width:104px;height:25px;background:#fff;border-right:1px solid #c8c8c8;border-bottom:1px solid #c8c8c8"></div><div style="left:1002px;top:479px;width:104px;height:25px;background:#fff;border-right:1px solid #c8c8c8;border-bottom:1px solid #c8c8c8"></div><div style="left:42px;top:504px;width:24px;height:25px;background:#f0f0f0;border-top:1px solid #fff;border-left:1px solid #fff;border-right:1px solid #696969;border-bottom:1px solid #696969"><div class="c" style="right:2px;top:6px">13</div></div><div style="left:66px;top:504px;width:104px;height:25px;background:#fff;border-right:1px solid #c8c8c8;border-bottom:1px solid #c8c8c8"><div class="c" style="right:2px;top:6px;">4#cell-9</div></div><div style="left:170px;top:504px;width:104px;height:25px;background:#fff;border-right:1px solid #c8c8c8;border-bottom:1px solid #c8c8c8"></div><div style="left:274px;top:504px;width:104px;height:25px;background:#fff;border-right:1px solid #c8c8c8;border-bottom:1px solid #c8c8c8"></div><div style="left:378px;top:504px;width:104px;height:25px;background:#fff;border-right:1px solid #c8c8c8;border-bottom:1px solid #c8c8c8"></div><div style="left:482px;top:504px;width:104px;height:25px;background:#fff;border-right:1px solid #c8c8c8;border-bottom:1px solid #c8c8c8"></div><div style="left:586px;top:504px;width:104px;height:25px;background:#fff;border-right:1px solid #c8c8c8;border-bottom:1px solid #c8c8c8"></div><div style="left:690px;top:504px;width:104px;height:25px;background:#fff;border-right:1px solid #c8c8c8;border-bottom:1px solid #c8c8c8"></div><div style="left:794px;top:504px;width:104px;height:25px;background:#fff;border-right:1px solid #c8c8c8;border-bottom:1px solid #c8c8c8"></div><div style="left:898px;top:504px;width:104px;height:25px;background:#fff;border-right:1px solid #c8c8c8;border-bottom:1px solid #c8c8c8"></div><div style="left:1002px;top:504px;width:104px;height:25px;background:#fff;border-right:1px solid #c8c8c8;border-bottom:1px solid #c8c8c8"></div><div style="left:42px;top:529px;width:24px;height:25px;background:#f0f0f0;border-top:1px solid #fff;border-left:1px solid #fff;border-right:1px solid #696969;border-bottom:1px solid #696969"><div class="c" style="right:2px;top:6px">14</div></div><div style="left:66px;top:529px;width:104px;height:25px;background:#fff;border-right:1px solid #c8c8c8;border-bottom:1px solid #c8c8c8"><div class="c" style="right:2px;top:6px;">4#cell-10</div></div><div style="left:170px;top:529px;width:104px;height:25px;background:#fff;border-right:1px solid #c8c8c8;border-bottom:1px solid #c8c8c8"></div><div style="left:274px;top:529px;width:104px;height:25px;background:#fff;border-right:1px solid #c8c8c8;border-bottom:1px solid #c8c8c8"></div><div style="left:378px;top:529px;width:104px;height:25px;background:#fff;border-right:1px solid #c8c8c8;border-bottom:1px solid #c8c8c8"></div><div style="left:482px;top:529px;width:104px;height:25px;background:#fff;border-right:1px solid #c8c8c8;border-bottom:1px solid #c8c8c8"></div><div style="left:586px;top:529px;width:104px;height:25px;background:#fff;border-right:1px solid #c8c8c8;border-bottom:1px solid #c8c8c8"></div><div style="left:690px;top:529px;width:104px;height:25px;background:#fff;border-right:1px solid #c8c8c8;border-bottom:1px solid #c8c8c8"></div><div style="left:794px;top:529px;width:104px;height:25px;background:#fff;border-right:1px solid #c8c8c8;border-bottom:1px solid #c8c8c8"></div><div style="left:898px;top:529px;width:104px;height:25px;background:#fff;border-right:1px solid #c8c8c8;border-bottom:1px solid #c8c8c8"></div><div style="left:1002px;top:529px;width:104px;height:25px;background:#fff;border-right:1px solid #c8c8c8;border-bottom:1px solid #c8c8c8"></div><div style="left:42px;top:554px;width:24px;height:25px;background:#f0f0f0;border-top:1px solid #fff;border-left:1px solid #fff;border-right:1px solid #696969;border-bottom:1px solid #696969"><div class="c" style="right:2px;top:6px">15</div></div><div style="left:66px;top:554px;width:104px;height:25px;background:#fff;border-right:1px solid #c8c8c8;border-bottom:1px solid #c8c8c8"><div class="c" style="right:2px;top:6px;">4#cell-11</div></div><div style="left:170px;top:554px;width:104px;height:25px;background:#fff;border-right:1px solid #c8c8c8;border-bottom:1px solid #c8c8c8"></div><div style="left:274px;top:554px;width:104px;height:25px;background:#fff;border-right:1px solid #c8c8c8;border-bottom:1px solid #c8c8c8"></div><div style="left:378px;top:554px;width:104px;height:25px;background:#fff;border-right:1px solid #c8c8c8;border-bottom:1px solid #c8c8c8"></div><div style="left:482px;top:554px;width:104px;height:25px;background:#fff;border-right:1px solid #c8c8c8;border-bottom:1px solid #c8c8c8"></div><div style="left:586px;top:554px;width:104px;height:25px;background:#fff;border-right:1px solid #c8c8c8;border-bottom:1px solid #c8c8c8"></div><div style="left:690px;top:554px;width:104px;height:25px;background:#fff;border-right:1px solid #c8c8c8;border-bottom:1px solid #c8c8c8"></div><div style="left:794px;top:554px;width:104px;height:25px;background:#fff;border-right:1px solid #c8c8c8;border-bottom:1px solid #c8c8c8"></div><div style="left:898px;top:554px;width:104px;height:25px;background:#fff;border-right:1px solid #c8c8c8;border-bottom:1px solid #c8c8c8"></div><div style="left:1002px;top:554px;width:104px;height:25px;background:#fff;border-right:1px solid #c8c8c8;border-bottom:1px solid #c8c8c8"></div><div style="left:42px;top:579px;width:24px;height:25px;background:#f0f0f0;border-top:1px solid #fff;border-left:1px solid #fff;border-right:1px solid #696969;border-bottom:1px solid #696969"><div class="c" style="right:2px;top:6px">16</div></div><div style="left:66px;top:579px;width:104px;height:25px;background:#fff;border-right:1px solid #c8c8c8;border-bottom:1px solid #c8c8c8"><div class="c" style="right:2px;top:6px;">4#cell-12</div></div><div style="left:170px;top:579px;width:104px;height:25px;background:#fff;border-right:1px solid #c8c8c8;border-bottom:1px solid #c8c8c8"></div><div style="left:274px;top:579px;width:104px;height:25px;background:#fff;border-right:1px solid #c8c8c8;border-bottom:1px solid #c8c8c8"></div><div style="left:378px;top:579px;width:104px;height:25px;background:#fff;border-right:1px solid #c8c8c8;border-bottom:1px solid #c8c8c8"></div><div style="left:482px;top:579px;width:104px;height:25px;background:#fff;border-right:1px solid #c8c8c8;border-bottom:1px solid #c8c8c8"></div><div style="left:586px;top:579px;width:104px;height:25px;background:#fff;border-right:1px solid #c8c8c8;border-bottom:1px solid #c8c8c8"></div><div style="left:690px;top:579px;width:104px;height:25px;background:#fff;border-right:1px solid #c8c8c8;border-bottom:1px solid #c8c8c8"></div><div style="left:794px;top:579px;width:104px;height:25px;background:#fff;border-right:1px solid #c8c8c8;border-bottom:1px solid #c8c8c8"></div><div style="left:898px;top:579px;width:104px;height:25px;background:#fff;border-right:1px solid #c8c8c8;border-bottom:1px solid #c8c8c8"></div><div style="left:1002px;top:579px;width:104px;height:25px;background:#fff;border-right:1px solid #c8c8c8;border-bottom:1px solid #c8c8c8"></div><div style="left:42px;top:604px;width:24px;height:25px;background:#f0f0f0;border-top:1px solid #fff;border-left:1px solid #fff;border-right:1px solid #696969;border-bottom:1px solid #696969"><div class="c" style="right:2px;top:6px">17</div></div><div style="left:66px;top:604px;width:104px;height:25px;background:#fff;border-right:1px solid #c8c8c8;border-bottom:1px solid #c8c8c8"><div class="c" style="right:2px;top:6px;">4#cell-13</div></div><div style="left:170px;top:604px;width:104px;height:25px;background:#fff;border-right:1px solid #c8c8c8;border-bottom:1px solid #c8c8c8"></div><div style="left:274px;top:604px;width:104px;height:25px;background:#fff;border-right:1px solid #c8c8c8;border-bottom:1px solid #c8c8c8"></div><div style="left:378px;top:604px;width:104px;height:25px;background:#fff;border-right:1px solid #c8c8c8;border-bottom:1px solid #c8c8c8"></div><div style="left:482px;top:604px;width:104px;height:25px;background:#fff;border-right:1px solid #c8c8c8;border-bottom:1px solid #c8c8c8"></div><div style="left:586px;top:604px;width:104px;height:25px;background:#fff;border-right:1px solid #c8c8c8;border-bottom:1px solid #c8c8c8"></div><div style="left:690px;top:604px;width:104px;height:25px;background:#fff;border-right:1px solid #c8c8c8;border-bottom:1px solid #c8c8c8"></div><div style="left:794px;top:604px;width:104px;height:25px;background:#fff;border-right:1px solid #c8c8c8;border-bottom:1px solid #c8c8c8"></div><div style="left:898px;top:604px;width:104px;height:25px;background:#fff;border-right:1px solid #c8c8c8;border-bottom:1px solid #c8c8c8"></div><div style="left:1002px;top:604px;width:104px;height:25px;background:#fff;border-right:1px solid #c8c8c8;border-bottom:1px solid #c8c8c8"></div><div style="left:42px;top:629px;width:24px;height:25px;background:#f0f0f0;border-top:1px solid #fff;border-left:1px solid #fff;border-right:1px solid #696969;border-bottom:1px solid #696969"><div class="c" style="right:2px;top:6px">18</div></div><div style="left:66px;top:629px;width:104px;height:25px;background:#fff;border-right:1px solid #c8c8c8;border-bottom:1px solid #c8c8c8"><div class="c" style="right:2px;top:6px;">4#cell-14</div></div><div style="left:170px;top:629px;width:104px;height:25px;background:#fff;border-right:1px solid #c8c8c8;border-bottom:1px solid #c8c8c8"></div><div style="left:274px;top:629px;width:104px;height:25px;background:#fff;border-right:1px solid #c8c8c8;border-bottom:1px solid #c8c8c8"></div><div style="left:378px;top:629px;width:104px;height:25px;background:#fff;border-right:1px solid #c8c8c8;border-bottom:1px solid #c8c8c8"></div><div style="left:482px;top:629px;width:104px;height:25px;background:#fff;border-right:1px solid #c8c8c8;border-bottom:1px solid #c8c8c8"></div><div style="left:586px;top:629px;width:104px;height:25px;background:#fff;border-right:1px solid #c8c8c8;border-bottom:1px solid #c8c8c8"></div><div style="left:690px;top:629px;width:104px;height:25px;background:#fff;border-right:1px solid #c8c8c8;border-bottom:1px solid #c8c8c8"></div><div style="left:794px;top:629px;width:104px;height:25px;background:#fff;border-right:1px solid #c8c8c8;border-bottom:1px solid #c8c8c8"></div><div style="left:898px;top:629px;width:104px;height:25px;background:#fff;border-right:1px solid #c8c8c8;border-bottom:1px solid #c8c8c8"></div><div style="left:1002px;top:629px;width:104px;height:25px;background:#fff;border-right:1px solid #c8c8c8;border-bottom:1px solid #c8c8c8"></div><div style="left:42px;top:654px;width:24px;height:25px;background:#f0f0f0;border-top:1px solid #fff;border-left:1px solid #fff;border-right:1px solid #696969;border-bottom:1px solid #696969"><div class="c" style="right:2px;top:6px">19</div></div><div style="left:66px;top:654px;width:104px;height:25px;background:#fff;border-right:1px solid #c8c8c8;border-bottom:1px solid #c8c8c8"><div class="c" style="right:2px;top:6px;">4#cell-15</div></div><div style="left:170px;top:654px;width:104px;height:25px;background:#fff;border-right:1px solid #c8c8c8;border-bottom:1px solid #c8c8c8"></div><div style="left:274px;top:654px;width:104px;height:25px;background:#fff;border-right:1px solid #c8c8c8;border-bottom:1px solid #c8c8c8"></div><div style="left:378px;top:654px;width:104px;height:25px;background:#fff;border-right:1px solid #c8c8c8;border-bottom:1px solid #c8c8c8"></div><div style="left:482px;top:654px;width:104px;height:25px;background:#fff;border-right:1px solid #c8c8c8;border-bottom:1px solid #c8c8c8"></div><div style="left:586px;top:654px;width:104px;height:25px;background:#fff;border-right:1px solid #c8c8c8;border-bottom:1px solid #c8c8c8"></div><div style="left:690px;top:654px;width:104px;height:25px;background:#fff;border-right:1px solid #c8c8c8;border-bottom:1px solid #c8c8c8"></div><div style="left:794px;top:654px;width:104px;height:25px;background:#fff;border-right:1px solid #c8c8c8;border-bottom:1px solid #c8c8c8"></div><div style="left:898px;top:654px;width:104px;height:25px;background:#fff;border-right:1px solid #c8c8c8;border-bottom:1px solid #c8c8c8"></div><div style="left:1002px;top:654px;width:104px;height:25px;background:#fff;border-right:1px solid #c8c8c8;border-bottom:1px solid #c8c8c8"></div></div><div style="left:0;top:0;width:1549px;height:817px"><div style="left:1379px;top:101px;width:300px;height:637px;border:1px solid #4d4d4d;border-radius:7px 7px 0 0;background:linear-gradient(#bccad9,#d2dfed 30px,#d7e4f2 31px,#d7e4f2);box-shadow:inset 1px 1px 0 #f4f8fc,inset -1px -1px 0 #f4f8fc"></div><svg width="16" height="16" shape-rendering="crispEdges" style="left:1389px;top:112px"><path d="M1 0h1v1h-1zM1 1h1v1h-1zM1 2h1v1h-1zM1 3h1v1h-1zM1 4h1v1h-1zM1 5h1v1h-1zM1 6h1v1h-1zM1 7h1v1h-1zM1 8h1v1h-1zM1 9h1v1h-1zM1 10h1v1h-1zM1 11h1v1h-1zM1 12h1v1h-1zM1 13h1v1h-1zM2 0h1v1h-1zM2 1h1v1h-1zM2 2h1v1h-1zM2 3h1v1h-1zM2 4h1v1h-1zM2 5h1v1h-1zM2 6h1v1h-1zM2 7h1v1h-1zM2 8h1v1h-1zM2 9h1v1h-1zM2 10h1v1h-1zM2 11h1v1h-1zM2 12h1v1h-1zM2 13h1v1h-1zM3 0h1v1h-1zM3 1h1v1h-1zM3 2h1v1h-1zM3 3h1v1h-1zM3 4h1v1h-1zM3 5h1v1h-1zM3 6h1v1h-1zM3 7h1v1h-1zM3 8h1v1h-1zM3 9h1v1h-1zM3 10h1v1h-1zM3 11h1v1h-1zM3 12h1v1h-1zM4 0h1v1h-1zM4 1h1v1h-1zM4 2h1v1h-1zM4 3h1v1h-1zM4 4h1v1h-1zM4 5h1v1h-1zM4 6h1v1h-1zM4 7h1v1h-1zM4 8h1v1h-1zM4 9h1v1h-1zM4 10h1v1h-1zM4 11h1v1h-1zM4 12h1v1h-1zM5 0h1v1h-1zM5 1h1v1h-1zM5 2h1v1h-1zM5 3h1v1h-1zM5 4h1v1h-1zM5 5h1v1h-1zM5 6h1v1h-1zM5 7h1v1h-1zM5 8h1v1h-1zM5 9h1v1h-1zM5 10h1v1h-1zM5 11h1v1h-1zM5 12h1v1h-1zM5 13h1v1h-1zM6 0h1v1h-1zM6 1h1v1h-1zM6 2h1v1h-1zM6 3h1v1h-1zM6 4h1v1h-1zM6 5h1v1h-1zM6 6h1v1h-1zM6 7h1v1h-1zM6 8h1v1h-1zM6 9h1v1h-1zM6 10h1v1h-1zM6 11h1v1h-1zM6 12h1v1h-1zM6 13h1v1h-1zM7 0h1v1h-1zM7 1h1v1h-1zM7 2h1v1h-1zM7 3h1v1h-1zM7 4h1v1h-1zM7 5h1v1h-1zM7 6h1v1h-1zM7 7h1v1h-1zM7 8h1v1h-1zM7 9h1v1h-1zM7 10h1v1h-1zM7 11h1v1h-1zM7 12h1v1h-1zM7 13h1v1h-1zM8 0h1v1h-1zM8 1h1v1h-1zM8 2h1v1h-1zM8 3h1v1h-1zM8 4h1v1h-1zM8 5h1v1h-1zM8 6h1v1h-1zM8 7h1v1h-1zM8 8h1v1h-1zM8 9h1v1h-1zM8 10h1v1h-1zM8 11h1v1h-1zM8 12h1v1h-1zM9 0h1v1h-1zM9 1h1v1h-1zM9 2h1v1h-1zM9 3h1v1h-1zM9 4h1v1h-1zM9 5h1v1h-1zM9 6h1v1h-1zM9 7h1v1h-1zM9 8h1v1h-1zM9 9h1v1h-1zM9 10h1v1h-1zM9 11h1v1h-1zM9 12h1v1h-1zM10 0h1v1h-1zM10 1h1v1h-1zM10 2h1v1h-1zM10 3h1v1h-1zM10 4h1v1h-1zM10 5h1v1h-1zM10 6h1v1h-1zM10 7h1v1h-1zM10 8h1v1h-1zM10 9h1v1h-1zM11 0h1v1h-1zM11 1h1v1h-1zM11 2h1v1h-1zM11 3h1v1h-1zM11 4h1v1h-1zM11 5h1v1h-1zM11 6h1v1h-1zM11 7h1v1h-1zM11 8h1v1h-1zM11 9h1v1h-1zM12 0h1v1h-1zM12 1h1v1h-1zM12 2h1v1h-1zM12 3h1v1h-1zM12 4h1v1h-1zM12 5h1v1h-1zM12 6h1v1h-1zM12 7h1v1h-1zM12 8h1v1h-1zM12 9h1v1h-1zM13 0h1v1h-1zM13 1h1v1h-1zM13 2h1v1h-1zM13 3h1v1h-1zM13 4h1v1h-1zM13 5h1v1h-1zM13 6h1v1h-1zM13 7h1v1h-1zM13 8h1v1h-1z" fill="#fff"/><path d="M0 0h1v1h-1zM1 0h1v1h-1zM2 0h1v1h-1zM3 0h1v1h-1zM4 0h1v1h-1zM5 0h1v1h-1zM6 0h1v1h-1zM7 0h1v1h-1zM8 0h1v1h-1zM9 0h1v1h-1zM10 0h1v1h-1zM11 0h1v1h-1zM12 0h1v1h-1zM13 0h1v1h-1zM14 0h1v1h-1zM0 1h1v1h-1zM0 2h1v1h-1zM0 3h1v1h-1zM0 4h1v1h-1zM0 5h1v1h-1zM0 6h1v1h-1zM0 7h1v1h-1zM0 8h1v1h-1zM0 9h1v1h-1zM0 10h1v1h-1zM0 11h1v1h-1zM0 12h1v1h-1zM0 13h1v1h-1zM0 14h1v1h-1zM14 1h1v1h-1zM14 2h1v1h-1zM14 3h1v1h-1zM14 4h1v1h-1zM14 5h1v1h-1zM14 6h1v1h-1zM14 7h1v1h-1zM14 8h1v1h-1zM14 9h1v1h-1zM13 9h1v1h-1zM10 10h1v1h-1zM11 10h1v1h-1zM12 10h1v1h-1zM13 10h1v1h-1zM10 11h1v1h-1zM10 12h1v1h-1zM3 13h1v1h-1zM4 13h1v1h-1zM8 13h1v1h-1zM9 13h1v1h-1zM0 14h1v1h-1zM1 14h1v1h-1zM2 14h1v1h-1zM5 14h1v1h-1zM6 14h1v1h-1zM7 14h1v1h-1z" fill="#000"/><path d="M2 2h1v1h-1zM2 3h1v1h-1zM2 4h1v1h-1zM2 5h1v1h-1zM2 6h1v1h-1zM3 2h1v1h-1zM3 6h1v1h-1zM4 3h1v1h-1zM4 4h1v1h-1zM4 5h1v1h-1zM6 3h1v1h-1zM6 4h1v1h-1zM6 5h1v1h-1zM7 2h1v1h-1zM7 6h1v1h-1zM8 3h1v1h-1zM8 4h1v1h-1zM8 5h1v1h-1zM10 3h1v1h-1zM10 4h1v1h-1zM10 5h1v1h-1zM11 2h1v1h-1zM12 2h1v1h-1zM11 6h1v1h-1zM12 6h1v1h-1z" fill="#ff0000"/><path d="M3 8h1v1h-1zM4 8h1v1h-1zM5 8h1v1h-1zM6 8h1v1h-1zM7 8h1v1h-1zM8 8h1v1h-1zM9 8h1v1h-1zM10 8h1v1h-1zM11 8h1v1h-1zM12 8h1v1h-1zM3 11h1v1h-1zM4 11h1v1h-1zM5 11h1v1h-1zM6 11h1v1h-1zM7 11h1v1h-1zM8 11h1v1h-1z" fill="#b4b4b4"/><path d="M13 11h1v1h-1zM14 11h1v1h-1zM13 12h1v1h-1zM14 12h1v1h-1z" fill="#1a8080"/></svg><div class="t" style="left:1409px;top:114px;font-size:13px;color:#a0a0a0">排序.mbp</div><div class="btn" style="left:1569px;top:111px;width:32px;height:18px;"></div><div style="left:1579px;top:119px;width:11px;height:5px;background:linear-gradient(#fafafa,#dcdcdc);border:1px solid #3c3c4c;border-radius:1.5px"></div><div class="btn" style="left:1603px;top:111px;width:32px;height:18px;"></div><div style="left:1613px;top:115px;width:11px;height:9px;background:#f4f4f4;border:1px solid #3c3c4c;border-radius:1px"></div><div style="left:1616px;top:118px;width:5px;height:3px;border:1px solid #3c3c4c"></div><div class="btn" style="left:1637px;top:111px;width:32px;height:18px;"></div><svg width="11" height="9" style="left:1647px;top:115px"><path d="M2 1.5L9 7.5M9 1.5L2 7.5" stroke="#3c3c4c" stroke-width="3.8" stroke-linecap="round"/><path d="M2 1.5L9 7.5M9 1.5L2 7.5" stroke="#f2f2f2" stroke-width="2" stroke-linecap="round"/></svg><div style="left:1387px;top:132px;width:284px;height:598px;background:#fff;border-top:1px solid #a0a0a0;border-left:1px solid #a0a0a0;border-right:1px solid #fff;border-bottom:1px solid #fff"></div><div style="left:1388px;top:133px;width:282px;height:596px;background:#fff;border-top:1px solid #696969;border-left:1px solid #696969;border-right:1px solid #e3e3e3;border-bottom:1px solid #e3e3e3"></div><div class="tx" style="left:1389px;top:134px">Tx = 24705: Err = 3076: ID = 1: F = 03: SR = 20ms</div><div style="left:1389px;top:174px;width:280px;height:554px;border-top:1px solid #696969;border-left:1px solid #696969"></div><div style="left:1390px;top:175px;width:279px;height:553px;border-top:1px solid #a0a0a0;border-left:1px solid #a0a0a0"></div><div style="left:1391px;top:176px;width:278px;height:552px;border-top:1px solid #696969;border-left:1px solid #696969;border-right:1px solid #e3e3e3;border-bottom:1px solid #e3e3e3"></div><div style="left:1392px;top:177px;width:24px;height:25px;background:#f0f0f0;border-top:1px solid #fff;border-left:1px solid #fff;border-right:1px solid #696969;border-bottom:1px solid #696969"></div><div style="left:1416px;top:177px;width:104px;height:25px;background:#f0f0f0;border-top:1px solid #fff;border-left:1px solid #fff;border-right:1px solid #696969;border-bottom:1px solid #696969"><div class="c" style="right:3px;top:6px">Alias</div></div><div style="left:1520px;top:177px;width:104px;height:25px;background:#f0f0f0;border-top:1px solid #fff;border-left:1px solid #fff;border-right:1px solid #696969;border-bottom:1px solid #696969"></div><div style="left:1624px;top:177px;width:104px;height:25px;background:#f0f0f0;border-top:1px solid #fff;border-left:1px solid #fff;border-right:1px solid #696969;border-bottom:1px solid #696969"></div><div style="left:1392px;top:202px;width:24px;height:25px;background:#f0f0f0;border-top:1px solid #fff;border-left:1px solid #fff;border-right:1px solid #696969;border-bottom:1px solid #696969"><div class="c" style="right:2px;top:6px">0</div></div><div style="left:1416px;top:202px;width:104px;height:25px;background:#fff;border-right:1px solid #c8c8c8;border-bottom:1px solid #c8c8c8"></div><div style="left:1520px;top:202px;width:104px;height:25px;background:#fff;border-right:1px solid #c8c8c8;border-bottom:1px solid #c8c8c8"></div><div style="left:1624px;top:202px;width:104px;height:25px;background:#fff;border-right:1px solid #c8c8c8;border-bottom:1px solid #c8c8c8"></div><div style="left:1392px;top:227px;width:24px;height:25px;background:#f0f0f0;border-top:1px solid #fff;border-left:1px solid #fff;border-right:1px solid #696969;border-bottom:1px solid #696969"><div class="c" style="right:2px;top:6px">1</div></div><div style="left:1416px;top:227px;width:104px;height:25px;background:#fff;border-right:1px solid #c8c8c8;border-bottom:1px solid #c8c8c8"></div><div style="left:1520px;top:227px;width:104px;height:25px;background:#fff;border-right:1px solid #c8c8c8;border-bottom:1px solid #c8c8c8"></div><div style="left:1624px;top:227px;width:104px;height:25px;background:#fff;border-right:1px solid #c8c8c8;border-bottom:1px solid #c8c8c8"></div><div style="left:1392px;top:252px;width:24px;height:25px;background:#f0f0f0;border-top:1px solid #fff;border-left:1px solid #fff;border-right:1px solid #696969;border-bottom:1px solid #696969"><div class="c" style="right:2px;top:6px">2</div></div><div style="left:1416px;top:252px;width:104px;height:25px;background:#fff;border-right:1px solid #c8c8c8;border-bottom:1px solid #c8c8c8"></div><div style="left:1520px;top:252px;width:104px;height:25px;background:#fff;border-right:1px solid #c8c8c8;border-bottom:1px solid #c8c8c8"></div><div style="left:1624px;top:252px;width:104px;height:25px;background:#fff;border-right:1px solid #c8c8c8;border-bottom:1px solid #c8c8c8"></div><div style="left:1392px;top:277px;width:24px;height:25px;background:#f0f0f0;border-top:1px solid #fff;border-left:1px solid #fff;border-right:1px solid #696969;border-bottom:1px solid #696969"><div class="c" style="right:2px;top:6px">3</div></div><div style="left:1416px;top:277px;width:104px;height:25px;background:#fff;border-right:1px solid #c8c8c8;border-bottom:1px solid #c8c8c8"></div><div style="left:1520px;top:277px;width:104px;height:25px;background:#fff;border-right:1px solid #c8c8c8;border-bottom:1px solid #c8c8c8"></div><div style="left:1624px;top:277px;width:104px;height:25px;background:#fff;border-right:1px solid #c8c8c8;border-bottom:1px solid #c8c8c8"></div><div style="left:1392px;top:302px;width:24px;height:25px;background:#f0f0f0;border-top:1px solid #fff;border-left:1px solid #fff;border-right:1px solid #696969;border-bottom:1px solid #696969"><div class="c" style="right:2px;top:6px">4</div></div><div style="left:1416px;top:302px;width:104px;height:25px;background:#fff;border-right:1px solid #c8c8c8;border-bottom:1px solid #c8c8c8"></div><div style="left:1520px;top:302px;width:104px;height:25px;background:#fff;border-right:1px solid #c8c8c8;border-bottom:1px solid #c8c8c8"></div><div style="left:1624px;top:302px;width:104px;height:25px;background:#fff;border-right:1px solid #c8c8c8;border-bottom:1px solid #c8c8c8"></div><div style="left:1392px;top:327px;width:24px;height:25px;background:#f0f0f0;border-top:1px solid #fff;border-left:1px solid #fff;border-right:1px solid #696969;border-bottom:1px solid #696969"><div class="c" style="right:2px;top:6px">5</div></div><div style="left:1416px;top:327px;width:104px;height:25px;background:#fff;border-right:1px solid #c8c8c8;border-bottom:1px solid #c8c8c8"></div><div style="left:1520px;top:327px;width:104px;height:25px;background:#fff;border-right:1px solid #c8c8c8;border-bottom:1px solid #c8c8c8"></div><div style="left:1624px;top:327px;width:104px;height:25px;background:#fff;border-right:1px solid #c8c8c8;border-bottom:1px solid #c8c8c8"></div><div style="left:1392px;top:352px;width:24px;height:25px;background:#f0f0f0;border-top:1px solid #696969;border-left:1px solid #696969"><div class="c" style="right:3px;top:6px">6</div></div><div style="left:1416px;top:352px;width:104px;height:25px;background:#fff;border-right:1px solid #c8c8c8;border-bottom:1px solid #c8c8c8"></div><div style="left:1520px;top:352px;width:104px;height:25px;background:#fff;border-right:1px solid #c8c8c8;border-bottom:1px solid #c8c8c8"></div><div style="left:1624px;top:352px;width:104px;height:25px;background:#fff;border-right:1px solid #c8c8c8;border-bottom:1px solid #c8c8c8"></div><div style="left:1392px;top:377px;width:24px;height:25px;background:#f0f0f0;border-top:1px solid #fff;border-left:1px solid #fff;border-right:1px solid #696969;border-bottom:1px solid #696969"><div class="c" style="right:2px;top:6px">7</div></div><div style="left:1416px;top:377px;width:104px;height:25px;background:#fff;border-right:1px solid #c8c8c8;border-bottom:1px solid #c8c8c8"></div><div style="left:1520px;top:377px;width:104px;height:25px;background:#fff;border-right:1px solid #c8c8c8;border-bottom:1px solid #c8c8c8"></div><div style="left:1624px;top:377px;width:104px;height:25px;background:#fff;border-right:1px solid #c8c8c8;border-bottom:1px solid #c8c8c8"></div><div style="left:1392px;top:402px;width:24px;height:25px;background:#f0f0f0;border-top:1px solid #fff;border-left:1px solid #fff;border-right:1px solid #696969;border-bottom:1px solid #696969"><div class="c" style="right:2px;top:6px">8</div></div><div style="left:1416px;top:402px;width:104px;height:25px;background:#fff;border-right:1px solid #c8c8c8;border-bottom:1px solid #c8c8c8"></div><div style="left:1520px;top:402px;width:104px;height:25px;background:#fff;border-right:1px solid #c8c8c8;border-bottom:1px solid #c8c8c8"></div><div style="left:1624px;top:402px;width:104px;height:25px;background:#fff;border-right:1px solid #c8c8c8;border-bottom:1px solid #c8c8c8"></div><div style="left:1392px;top:427px;width:24px;height:25px;background:#f0f0f0;border-top:1px solid #fff;border-left:1px solid #fff;border-right:1px solid #696969;border-bottom:1px solid #696969"><div class="c" style="right:2px;top:6px">9</div></div><div style="left:1416px;top:427px;width:104px;height:25px;background:#fff;border-right:1px solid #c8c8c8;border-bottom:1px solid #c8c8c8"></div><div style="left:1520px;top:427px;width:104px;height:25px;background:#fff;border-right:1px solid #c8c8c8;border-bottom:1px solid #c8c8c8"></div><div style="left:1624px;top:427px;width:104px;height:25px;background:#fff;border-right:1px solid #c8c8c8;border-bottom:1px solid #c8c8c8"></div><div style="left:1392px;top:452px;width:24px;height:25px;background:#f0f0f0;border-top:1px solid #fff;border-left:1px solid #fff;border-right:1px solid #696969;border-bottom:1px solid #696969"><div class="c" style="right:2px;top:6px">10</div></div><div style="left:1416px;top:452px;width:104px;height:25px;background:#fff;border-right:1px solid #c8c8c8;border-bottom:1px solid #c8c8c8"></div><div style="left:1520px;top:452px;width:104px;height:25px;background:#fff;border-right:1px solid #c8c8c8;border-bottom:1px solid #c8c8c8"></div><div style="left:1624px;top:452px;width:104px;height:25px;background:#fff;border-right:1px solid #c8c8c8;border-bottom:1px solid #c8c8c8"></div><div style="left:1392px;top:477px;width:24px;height:25px;background:#f0f0f0;border-top:1px solid #fff;border-left:1px solid #fff;border-right:1px solid #696969;border-bottom:1px solid #696969"><div class="c" style="right:2px;top:6px">11</div></div><div style="left:1416px;top:477px;width:104px;height:25px;background:#fff;border-right:1px solid #c8c8c8;border-bottom:1px solid #c8c8c8"><div class="c" style="right:2px;top:6px;"><span style="font-size:12px">单体最高电压</span></div></div><div style="left:1520px;top:477px;width:104px;height:25px;background:#fff;border-right:1px solid #c8c8c8;border-bottom:1px solid #c8c8c8"></div><div style="left:1624px;top:477px;width:104px;height:25px;background:#fff;border-right:1px solid #c8c8c8;border-bottom:1px solid #c8c8c8"></div><div style="left:1392px;top:502px;width:24px;height:25px;background:#f0f0f0;border-top:1px solid #fff;border-left:1px solid #fff;border-right:1px solid #696969;border-bottom:1px solid #696969"><div class="c" style="right:2px;top:6px">12</div></div><div style="left:1416px;top:502px;width:104px;height:25px;background:#fff;border-right:1px solid #c8c8c8;border-bottom:1px solid #c8c8c8"><div class="c" style="right:2px;top:6px;"><span style="font-size:12px">子节点号</span></div></div><div style="left:1520px;top:502px;width:104px;height:25px;background:#fff;border-right:1px solid #c8c8c8;border-bottom:1px solid #c8c8c8"></div><div style="left:1624px;top:502px;width:104px;height:25px;background:#fff;border-right:1px solid #c8c8c8;border-bottom:1px solid #c8c8c8"></div><div style="left:1392px;top:527px;width:24px;height:25px;background:#f0f0f0;border-top:1px solid #fff;border-left:1px solid #fff;border-right:1px solid #696969;border-bottom:1px solid #696969"><div class="c" style="right:2px;top:6px">13</div></div><div style="left:1416px;top:527px;width:104px;height:25px;background:#fff;border-right:1px solid #c8c8c8;border-bottom:1px solid #c8c8c8"><div class="c" style="right:2px;top:6px;"><span style="font-size:12px">电池序号</span></div></div><div style="left:1520px;top:527px;width:104px;height:25px;background:#fff;border-right:1px solid #c8c8c8;border-bottom:1px solid #c8c8c8"></div><div style="left:1624px;top:527px;width:104px;height:25px;background:#fff;border-right:1px solid #c8c8c8;border-bottom:1px solid #c8c8c8"></div><div style="left:1392px;top:552px;width:24px;height:25px;background:#f0f0f0;border-top:1px solid #fff;border-left:1px solid #fff;border-right:1px solid #696969;border-bottom:1px solid #696969"><div class="c" style="right:2px;top:6px">14</div></div><div style="left:1416px;top:552px;width:104px;height:25px;background:#fff;border-right:1px solid #c8c8c8;border-bottom:1px solid #c8c8c8"><div class="c" style="right:2px;top:6px;"><span style="font-size:12px">单体最低电压</span></div></div><div style="left:1520px;top:552px;width:104px;height:25px;background:#fff;border-right:1px solid #c8c8c8;border-bottom:1px solid #c8c8c8"></div><div style="left:1624px;top:552px;width:104px;height:25px;background:#fff;border-right:1px solid #c8c8c8;border-bottom:1px solid #c8c8c8"></div><div style="left:1392px;top:577px;width:24px;height:25px;background:#f0f0f0;border-top:1px solid #fff;border-left:1px solid #fff;border-right:1px solid #696969;border-bottom:1px solid #696969"><div class="c" style="right:2px;top:6px">15</div></div><div style="left:1416px;top:577px;width:104px;height:25px;background:#fff;border-right:1px solid #c8c8c8;border-bottom:1px solid #c8c8c8"><div class="c" style="right:2px;top:6px;"><span style="font-size:12px">子节点号</span></div></div><div style="left:1520px;top:577px;width:104px;height:25px;background:#fff;border-right:1px solid #c8c8c8;border-bottom:1px solid #c8c8c8"></div><div style="left:1624px;top:577px;width:104px;height:25px;background:#fff;border-right:1px solid #c8c8c8;border-bottom:1px solid #c8c8c8"></div><div style="left:1392px;top:602px;width:24px;height:25px;background:#f0f0f0;border-top:1px solid #fff;border-left:1px solid #fff;border-right:1px solid #696969;border-bottom:1px solid #696969"><div class="c" style="right:2px;top:6px">16</div></div><div style="left:1416px;top:602px;width:104px;height:25px;background:#fff;border-right:1px solid #c8c8c8;border-bottom:1px solid #c8c8c8"><div class="c" style="right:2px;top:6px;"><span style="font-size:12px">电池序号</span></div></div><div style="left:1520px;top:602px;width:104px;height:25px;background:#fff;border-right:1px solid #c8c8c8;border-bottom:1px solid #c8c8c8"></div><div style="left:1624px;top:602px;width:104px;height:25px;background:#fff;border-right:1px solid #c8c8c8;border-bottom:1px solid #c8c8c8"></div><div style="left:1392px;top:627px;width:24px;height:25px;background:#f0f0f0;border-top:1px solid #fff;border-left:1px solid #fff;border-right:1px solid #696969;border-bottom:1px solid #696969"><div class="c" style="right:2px;top:6px">17</div></div><div style="left:1416px;top:627px;width:104px;height:25px;background:#fff;border-right:1px solid #c8c8c8;border-bottom:1px solid #c8c8c8"><div class="c" style="right:2px;top:6px;"><span style="font-size:12px">单体最高温度</span></div></div><div style="left:1520px;top:627px;width:104px;height:25px;background:#fff;border-right:1px solid #c8c8c8;border-bottom:1px solid #c8c8c8"></div><div style="left:1624px;top:627px;width:104px;height:25px;background:#fff;border-right:1px solid #c8c8c8;border-bottom:1px solid #c8c8c8"></div><div style="left:1392px;top:652px;width:24px;height:25px;background:#f0f0f0;border-top:1px solid #fff;border-left:1px solid #fff;border-right:1px solid #696969;border-bottom:1px solid #696969"><div class="c" style="right:2px;top:6px">18</div></div><div style="left:1416px;top:652px;width:104px;height:25px;background:#fff;border-right:1px solid #c8c8c8;border-bottom:1px solid #c8c8c8"><div class="c" style="right:2px;top:6px;"><span style="font-size:12px">子节点号</span></div></div><div style="left:1520px;top:652px;width:104px;height:25px;background:#fff;border-right:1px solid #c8c8c8;border-bottom:1px solid #c8c8c8"></div><div style="left:1624px;top:652px;width:104px;height:25px;background:#fff;border-right:1px solid #c8c8c8;border-bottom:1px solid #c8c8c8"></div><div style="left:1392px;top:677px;width:24px;height:25px;background:#f0f0f0;border-top:1px solid #fff;border-left:1px solid #fff;border-right:1px solid #696969;border-bottom:1px solid #696969"><div class="c" style="right:2px;top:6px">19</div></div><div style="left:1416px;top:677px;width:104px;height:25px;background:#fff;border-right:1px solid #c8c8c8;border-bottom:1px solid #c8c8c8"><div class="c" style="right:2px;top:6px;"><span style="font-size:12px">电池序号</span></div></div><div style="left:1520px;top:677px;width:104px;height:25px;background:#fff;border-right:1px solid #c8c8c8;border-bottom:1px solid #c8c8c8"></div><div style="left:1624px;top:677px;width:104px;height:25px;background:#fff;border-right:1px solid #c8c8c8;border-bottom:1px solid #c8c8c8"></div></div><div style="left:0;top:0;width:1549px;height:817px"><div style="left:195px;top:122px;width:1122px;height:671px;border:1px solid #4d4d4d;border-radius:7px 7px 0 0;background:linear-gradient(#bccad9,#d2dfed 30px,#d7e4f2 31px,#d7e4f2);box-shadow:inset 1px 1px 0 #f4f8fc,inset -1px -1px 0 #f4f8fc"></div><svg width="16" height="16" shape-rendering="crispEdges" style="left:205px;top:133px"><path d="M1 0h1v1h-1zM1 1h1v1h-1zM1 2h1v1h-1zM1 3h1v1h-1zM1 4h1v1h-1zM1 5h1v1h-1zM1 6h1v1h-1zM1 7h1v1h-1zM1 8h1v1h-1zM1 9h1v1h-1zM1 10h1v1h-1zM1 11h1v1h-1zM1 12h1v1h-1zM1 13h1v1h-1zM2 0h1v1h-1zM2 1h1v1h-1zM2 2h1v1h-1zM2 3h1v1h-1zM2 4h1v1h-1zM2 5h1v1h-1zM2 6h1v1h-1zM2 7h1v1h-1zM2 8h1v1h-1zM2 9h1v1h-1zM2 10h1v1h-1zM2 11h1v1h-1zM2 12h1v1h-1zM2 13h1v1h-1zM3 0h1v1h-1zM3 1h1v1h-1zM3 2h1v1h-1zM3 3h1v1h-1zM3 4h1v1h-1zM3 5h1v1h-1zM3 6h1v1h-1zM3 7h1v1h-1zM3 8h1v1h-1zM3 9h1v1h-1zM3 10h1v1h-1zM3 11h1v1h-1zM3 12h1v1h-1zM4 0h1v1h-1zM4 1h1v1h-1zM4 2h1v1h-1zM4 3h1v1h-1zM4 4h1v1h-1zM4 5h1v1h-1zM4 6h1v1h-1zM4 7h1v1h-1zM4 8h1v1h-1zM4 9h1v1h-1zM4 10h1v1h-1zM4 11h1v1h-1zM4 12h1v1h-1zM5 0h1v1h-1zM5 1h1v1h-1zM5 2h1v1h-1zM5 3h1v1h-1zM5 4h1v1h-1zM5 5h1v1h-1zM5 6h1v1h-1zM5 7h1v1h-1zM5 8h1v1h-1zM5 9h1v1h-1zM5 10h1v1h-1zM5 11h1v1h-1zM5 12h1v1h-1zM5 13h1v1h-1zM6 0h1v1h-1zM6 1h1v1h-1zM6 2h1v1h-1zM6 3h1v1h-1zM6 4h1v1h-1zM6 5h1v1h-1zM6 6h1v1h-1zM6 7h1v1h-1zM6 8h1v1h-1zM6 9h1v1h-1zM6 10h1v1h-1zM6 11h1v1h-1zM6 12h1v1h-1zM6 13h1v1h-1zM7 0h1v1h-1zM7 1h1v1h-1zM7 2h1v1h-1zM7 3h1v1h-1zM7 4h1v1h-1zM7 5h1v1h-1zM7 6h1v1h-1zM7 7h1v1h-1zM7 8h1v1h-1zM7 9h1v1h-1zM7 10h1v1h-1zM7 11h1v1h-1zM7 12h1v1h-1zM7 13h1v1h-1zM8 0h1v1h-1zM8 1h1v1h-1zM8 2h1v1h-1zM8 3h1v1h-1zM8 4h1v1h-1zM8 5h1v1h-1zM8 6h1v1h-1zM8 7h1v1h-1zM8 8h1v1h-1zM8 9h1v1h-1zM8 10h1v1h-1zM8 11h1v1h-1zM8 12h1v1h-1zM9 0h1v1h-1zM9 1h1v1h-1zM9 2h1v1h-1zM9 3h1v1h-1zM9 4h1v1h-1zM9 5h1v1h-1zM9 6h1v1h-1zM9 7h1v1h-1zM9 8h1v1h-1zM9 9h1v1h-1zM9 10h1v1h-1zM9 11h1v1h-1zM9 12h1v1h-1zM10 0h1v1h-1zM10 1h1v1h-1zM10 2h1v1h-1zM10 3h1v1h-1zM10 4h1v1h-1zM10 5h1v1h-1zM10 6h1v1h-1zM10 7h1v1h-1zM10 8h1v1h-1zM10 9h1v1h-1zM11 0h1v1h-1zM11 1h1v1h-1zM11 2h1v1h-1zM11 3h1v1h-1zM11 4h1v1h-1zM11 5h1v1h-1zM11 6h1v1h-1zM11 7h1v1h-1zM11 8h1v1h-1zM11 9h1v1h-1zM12 0h1v1h-1zM12 1h1v1h-1zM12 2h1v1h-1zM12 3h1v1h-1zM12 4h1v1h-1zM12 5h1v1h-1zM12 6h1v1h-1zM12 7h1v1h-1zM12 8h1v1h-1zM12 9h1v1h-1zM13 0h1v1h-1zM13 1h1v1h-1zM13 2h1v1h-1zM13 3h1v1h-1zM13 4h1v1h-1zM13 5h1v1h-1zM13 6h1v1h-1zM13 7h1v1h-1zM13 8h1v1h-1z" fill="#fff"/><path d="M0 0h1v1h-1zM1 0h1v1h-1zM2 0h1v1h-1zM3 0h1v1h-1zM4 0h1v1h-1zM5 0h1v1h-1zM6 0h1v1h-1zM7 0h1v1h-1zM8 0h1v1h-1zM9 0h1v1h-1zM10 0h1v1h-1zM11 0h1v1h-1zM12 0h1v1h-1zM13 0h1v1h-1zM14 0h1v1h-1zM0 1h1v1h-1zM0 2h1v1h-1zM0 3h1v1h-1zM0 4h1v1h-1zM0 5h1v1h-1zM0 6h1v1h-1zM0 7h1v1h-1zM0 8h1v1h-1zM0 9h1v1h-1zM0 10h1v1h-1zM0 11h1v1h-1zM0 12h1v1h-1zM0 13h1v1h-1zM0 14h1v1h-1zM14 1h1v1h-1zM14 2h1v1h-1zM14 3h1v1h-1zM14 4h1v1h-1zM14 5h1v1h-1zM14 6h1v1h-1zM14 7h1v1h-1zM14 8h1v1h-1zM14 9h1v1h-1zM13 9h1v1h-1zM10 10h1v1h-1zM11 10h1v1h-1zM12 10h1v1h-1zM13 10h1v1h-1zM10 11h1v1h-1zM10 12h1v1h-1zM3 13h1v1h-1zM4 13h1v1h-1zM8 13h1v1h-1zM9 13h1v1h-1zM0 14h1v1h-1zM1 14h1v1h-1zM2 14h1v1h-1zM5 14h1v1h-1zM6 14h1v1h-1zM7 14h1v1h-1z" fill="#000"/><path d="M2 2h1v1h-1zM2 3h1v1h-1zM2 4h1v1h-1zM2 5h1v1h-1zM2 6h1v1h-1zM3 2h1v1h-1zM3 6h1v1h-1zM4 3h1v1h-1zM4 4h1v1h-1zM4 5h1v1h-1zM6 3h1v1h-1zM6 4h1v1h-1zM6 5h1v1h-1zM7 2h1v1h-1zM7 6h1v1h-1zM8 3h1v1h-1zM8 4h1v1h-1zM8 5h1v1h-1zM10 3h1v1h-1zM10 4h1v1h-1zM10 5h1v1h-1zM11 2h1v1h-1zM12 2h1v1h-1zM11 6h1v1h-1zM12 6h1v1h-1z" fill="#ff0000"/><path d="M3 8h1v1h-1zM4 8h1v1h-1zM5 8h1v1h-1zM6 8h1v1h-1zM7 8h1v1h-1zM8 8h1v1h-1zM9 8h1v1h-1zM10 8h1v1h-1zM11 8h1v1h-1zM12 8h1v1h-1zM3 11h1v1h-1zM4 11h1v1h-1zM5 11h1v1h-1zM6 11h1v1h-1zM7 11h1v1h-1zM8 11h1v1h-1z" fill="#b4b4b4"/><path d="M13 11h1v1h-1zM14 11h1v1h-1zM13 12h1v1h-1zM14 12h1v1h-1z" fill="#1a8080"/></svg><div class="t" style="left:225px;top:135px;font-size:13px;color:#a0a0a0">子节点1#-3#测试.mbp</div><div class="btn" style="left:1207px;top:132px;width:32px;height:18px;"></div><div style="left:1217px;top:140px;width:11px;height:5px;background:linear-gradient(#fafafa,#dcdcdc);border:1px solid #3c3c4c;border-radius:1.5px"></div><div class="btn" style="left:1241px;top:132px;width:32px;height:18px;"></div><div style="left:1251px;top:136px;width:11px;height:9px;background:#f4f4f4;border:1px solid #3c3c4c;border-radius:1px"></div><div style="left:1254px;top:139px;width:5px;height:3px;border:1px solid #3c3c4c"></div><div class="btn" style="left:1275px;top:132px;width:32px;height:18px;"></div><svg width="11" height="9" style="left:1285px;top:136px"><path d="M2 1.5L9 7.5M9 1.5L2 7.5" stroke="#3c3c4c" stroke-width="3.8" stroke-linecap="round"/><path d="M2 1.5L9 7.5M9 1.5L2 7.5" stroke="#f2f2f2" stroke-width="2" stroke-linecap="round"/></svg><div style="left:203px;top:153px;width:1106px;height:632px;background:#fff;border-top:1px solid #a0a0a0;border-left:1px solid #a0a0a0;border-right:1px solid #fff;border-bottom:1px solid #fff"></div><div style="left:204px;top:154px;width:1104px;height:630px;background:#fff;border-top:1px solid #696969;border-left:1px solid #696969;border-right:1px solid #e3e3e3;border-bottom:1px solid #e3e3e3"></div><div class="tx" style="left:205px;top:155px">Tx = 24716: Err = 3075: ID = 1: F = 03: SR = 20ms</div><div style="left:205px;top:195px;width:1102px;height:588px;border-top:1px solid #696969;border-left:1px solid #696969"></div><div style="left:206px;top:196px;width:1101px;height:587px;border-top:1px solid #a0a0a0;border-left:1px solid #a0a0a0"></div><div style="left:207px;top:197px;width:1100px;height:586px;border-top:1px solid #696969;border-left:1px solid #696969;border-right:1px solid #e3e3e3;border-bottom:1px solid #e3e3e3"></div><div style="left:207px;top:197px;width:1100px;height:586px;border-right:1px solid #696969;border-bottom:1px solid #696969"></div><div style="left:208px;top:198px;width:24px;height:25px;background:#f0f0f0;border-top:1px solid #fff;border-left:1px solid #fff;border-right:1px solid #696969;border-bottom:1px solid #696969"></div><div style="left:232px;top:198px;width:104px;height:25px;background:#f0f0f0;border-top:1px solid #fff;border-left:1px solid #fff;border-right:1px solid #696969;border-bottom:1px solid #696969"><div class="c" style="right:3px;top:6px">Alias</div></div><div style="left:336px;top:198px;width:104px;height:25px;background:#f0f0f0;border-top:1px solid #696969;border-left:1px solid #696969"><div class="c" style="right:3px;top:6px">40100</div></div><div style="left:440px;top:198px;width:104px;height:25px;background:#f0f0f0;border-top:1px solid #fff;border-left:1px solid #fff;border-right:1px solid #696969;border-bottom:1px solid #696969"><div class="c" style="right:3px;top:6px">Alias</div></div><div style="left:544px;top:198px;width:104px;height:25px;background:#f0f0f0;border-top:1px solid #fff;border-left:1px solid #fff;border-right:1px solid #696969;border-bottom:1px solid #696969"><div class="c" style="right:3px;top:6px">40120</div></div><div style="left:648px;top:198px;width:104px;height:25px;background:#f0f0f0;border-top:1px solid #fff;border-left:1px solid #fff;border-right:1px solid #696969;border-bottom:1px solid #696969"><div class="c" style="right:3px;top:6px">Alias</div></div><div style="left:752px;top:198px;width:104px;height:25px;background:#f0f0f0;border-top:1px solid #fff;border-left:1px solid #fff;border-right:1px solid #696969;border-bottom:1px solid #696969"><div class="c" style="right:3px;top:6px">40140</div></div><div style="left:856px;top:198px;width:104px;height:25px;background:#f0f0f0;border-top:1px solid #fff;border-left:1px solid #fff;border-right:1px solid #696969;border-bottom:1px solid #696969"><div class="c" style="right:3px;top:6px">Alias</div></div><div style="left:960px;top:198px;width:104px;height:25px;background:#f0f0f0;border-top:1px solid #fff;border-left:1px solid #fff;border-right:1px solid #696969;border-bottom:1px solid #696969"><div class="c" style="right:3px;top:6px">40160</div></div><div style="left:1064px;top:198px;width:104px;height:25px;background:#f0f0f0;border-top:1px solid #fff;border-left:1px solid #fff;border-right:1px solid #696969;border-bottom:1px solid #696969"><div class="c" style="right:3px;top:6px">Alias</div></div><div style="left:1168px;top:198px;width:104px;height:25px;background:#f0f0f0;border-top:1px solid #fff;border-left:1px solid #fff;border-right:1px solid #696969;border-bottom:1px solid #696969"><div class="c" style="right:3px;top:6px">40180</div></div><div style="left:208px;top:223px;width:24px;height:25px;background:#f0f0f0;border-top:1px solid #696969;border-left:1px solid #696969"><div class="c" style="right:3px;top:6px">0</div></div><div style="left:232px;top:223px;width:104px;height:25px;background:#fff;border-right:1px solid #c8c8c8;border-bottom:1px solid #c8c8c8"><div class="c" style="right:2px;top:6px;">1#cell-1</div></div><div style="left:336px;top:223px;width:104px;height:25px;background:#0078d7;border-right:1px solid #c8c8c8;border-bottom:1px solid #c8c8c8"><div class="c" style="right:2px;top:6px;color:#fff">3636</div></div><div style="left:440px;top:223px;width:104px;height:25px;background:#fff;border-right:1px solid #c8c8c8;border-bottom:1px solid #c8c8c8"><div class="c" style="right:2px;top:6px;">DIS-5</div></div><div style="left:544px;top:223px;width:104px;height:25px;background:#fff;border-right:1px solid #c8c8c8;border-bottom:1px solid #c8c8c8"><div class="c" style="right:2px;top:6px;">0</div></div><div style="left:648px;top:223px;width:104px;height:25px;background:#fff;border-right:1px solid #c8c8c8;border-bottom:1px solid #c8c8c8"><div class="c" style="right:2px;top:6px;">2#cell-6</div></div><div style="left:752px;top:223px;width:104px;height:25px;background:#fff;border-right:1px solid #c8c8c8;border-bottom:1px solid #c8c8c8"><div class="c" style="right:2px;top:6px;">3639</div></div><div style="left:856px;top:223px;width:104px;height:25px;background:#fff;border-right:1px solid #c8c8c8;border-bottom:1px solid #c8c8c8"><div class="c" style="right:2px;top:6px;">DIS-10</div></div><div style="left:960px;top:223px;width:104px;height:25px;background:#fff;border-right:1px solid #c8c8c8;border-bottom:1px solid #c8c8c8"><div class="c" style="right:2px;top:6px;">0</div></div><div style="left:1064px;top:223px;width:104px;height:25px;background:#fff;border-right:1px solid #c8c8c8;border-bottom:1px solid #c8c8c8"><div class="c" style="right:2px;top:6px;">3#cell-11</div></div><div style="left:1168px;top:223px;width:104px;height:25px;background:#fff;border-right:1px solid #c8c8c8;border-bottom:1px solid #c8c8c8"><div class="c" style="right:2px;top:6px;">3643</div></div><div style="left:208px;top:248px;width:24px;height:25px;background:#f0f0f0;border-top:1px solid #fff;border-left:1px solid #fff;border-right:1px solid #696969;border-bottom:1px solid #696969"><div class="c" style="right:2px;top:6px">1</div></div><div style="left:232px;top:248px;width:104px;height:25px;background:#fff;border-right:1px solid #c8c8c8;border-bottom:1px solid #c8c8c8"><div class="c" style="right:2px;top:6px;">1#cell-2</div></div><div style="left:336px;top:248px;width:104px;height:25px;background:#fff;border-right:1px solid #c8c8c8;border-bottom:1px solid #c8c8c8"><div class="c" style="right:2px;top:6px;">3639</div></div><div style="left:440px;top:248px;width:104px;height:25px;background:#fff;border-right:1px solid #c8c8c8;border-bottom:1px solid #c8c8c8"><div class="c" style="right:2px;top:6px;">DIS-6</div></div><div style="left:544px;top:248px;width:104px;height:25px;background:#fff;border-right:1px solid #c8c8c8;border-bottom:1px solid #c8c8c8"><div class="c" style="right:2px;top:6px;">0</div></div><div style="left:648px;top:248px;width:104px;height:25px;background:#fff;border-right:1px solid #c8c8c8;border-bottom:1px solid #c8c8c8"><div class="c" style="right:2px;top:6px;">2#cell-7</div></div><div style="left:752px;top:248px;width:104px;height:25px;background:#fff;border-right:1px solid #c8c8c8;border-bottom:1px solid #c8c8c8"><div class="c" style="right:2px;top:6px;">3639</div></div><div style="left:856px;top:248px;width:104px;height:25px;background:#fff;border-right:1px solid #c8c8c8;border-bottom:1px solid #c8c8c8"><div class="c" style="right:2px;top:6px;">DIS-11</div></div><div style="left:960px;top:248px;width:104px;height:25px;background:#fff;border-right:1px solid #c8c8c8;border-bottom:1px solid #c8c8c8"><div class="c" style="right:2px;top:6px;">0</div></div><div style="left:1064px;top:248px;width:104px;height:25px;background:#fff;border-right:1px solid #c8c8c8;border-bottom:1px solid #c8c8c8"><div class="c" style="right:2px;top:6px;">3#cell-12</div></div><div style="left:1168px;top:248px;width:104px;height:25px;background:#fff;border-right:1px solid #c8c8c8;border-bottom:1px solid #c8c8c8"><div class="c" style="right:2px;top:6px;">3642</div></div><div style="left:208px;top:273px;width:24px;height:25px;background:#f0f0f0;border-top:1px solid #fff;border-left:1px solid #fff;border-right:1px solid #696969;border-bottom:1px solid #696969"><div class="c" style="right:2px;top:6px">2</div></div><div style="left:232px;top:273px;width:104px;height:25px;background:#fff;border-right:1px solid #c8c8c8;border-bottom:1px solid #c8c8c8"><div class="c" style="right:2px;top:6px;">1#cell-3</div></div><div style="left:336px;top:273px;width:104px;height:25px;background:#fff;border-right:1px solid #c8c8c8;border-bottom:1px solid #c8c8c8"><div class="c" style="right:2px;top:6px;">3638</div></div><div style="left:440px;top:273px;width:104px;height:25px;background:#fff;border-right:1px solid #c8c8c8;border-bottom:1px solid #c8c8c8"><div class="c" style="right:2px;top:6px;">DIS-7</div></div><div style="left:544px;top:273px;width:104px;height:25px;background:#fff;border-right:1px solid #c8c8c8;border-bottom:1px solid #c8c8c8"><div class="c" style="right:2px;top:6px;">0</div></div><div style="left:648px;top:273px;width:104px;height:25px;background:#fff;border-right:1px solid #c8c8c8;border-bottom:1px solid #c8c8c8"><div class="c" style="right:2px;top:6px;">2#cell-8</div></div><div style="left:752px;top:273px;width:104px;height:25px;background:#fff;border-right:1px solid #c8c8c8;border-bottom:1px solid #c8c8c8"><div class="c" style="right:2px;top:6px;">3638</div></div><div style="left:856px;top:273px;width:104px;height:25px;background:#fff;border-right:1px solid #c8c8c8;border-bottom:1px solid #c8c8c8"><div class="c" style="right:2px;top:6px;">DIS-12</div></div><div style="left:960px;top:273px;width:104px;height:25px;background:#fff;border-right:1px solid #c8c8c8;border-bottom:1px solid #c8c8c8"><div class="c" style="right:2px;top:6px;">0</div></div><div style="left:1064px;top:273px;width:104px;height:25px;background:#fff;border-right:1px solid #c8c8c8;border-bottom:1px solid #c8c8c8"><div class="c" style="right:2px;top:6px;">3#cell-13</div></div><div style="left:1168px;top:273px;width:104px;height:25px;background:#fff;border-right:1px solid #c8c8c8;border-bottom:1px solid #c8c8c8"><div class="c" style="right:2px;top:6px;">3642</div></div><div style="left:208px;top:298px;width:24px;height:25px;background:#f0f0f0;border-top:1px solid #fff;border-left:1px solid #fff;border-right:1px solid #696969;border-bottom:1px solid #696969"><div class="c" style="right:2px;top:6px">3</div></div><div style="left:232px;top:298px;width:104px;height:25px;background:#fff;border-right:1px solid #c8c8c8;border-bottom:1px solid #c8c8c8"><div class="c" style="right:2px;top:6px;">1#cell-4</div></div><div style="left:336px;top:298px;width:104px;height:25px;background:#fff;border-right:1px solid #c8c8c8;border-bottom:1px solid #c8c8c8"><div class="c" style="right:2px;top:6px;">3637</div></div><div style="left:440px;top:298px;width:104px;height:25px;background:#fff;border-right:1px solid #c8c8c8;border-bottom:1px solid #c8c8c8"><div class="c" style="right:2px;top:6px;">DIS-8</div></div><div style="left:544px;top:298px;width:104px;height:25px;background:#fff;border-right:1px solid #c8c8c8;border-bottom:1px solid #c8c8c8"><div class="c" style="right:2px;top:6px;">0</div></div><div style="left:648px;top:298px;width:104px;height:25px;background:#fff;border-right:1px solid #c8c8c8;border-bottom:1px solid #c8c8c8"><div class="c" style="right:2px;top:6px;">2#cell-9</div></div><div style="left:752px;top:298px;width:104px;height:25px;background:#fff;border-right:1px solid #c8c8c8;border-bottom:1px solid #c8c8c8"><div class="c" style="right:2px;top:6px;">3637</div></div><div style="left:856px;top:298px;width:104px;height:25px;background:#fff;border-right:1px solid #c8c8c8;border-bottom:1px solid #c8c8c8"><div class="c" style="right:2px;top:6px;">DIS-13</div></div><div style="left:960px;top:298px;width:104px;height:25px;background:#fff;border-right:1px solid #c8c8c8;border-bottom:1px solid #c8c8c8"><div class="c" style="right:2px;top:6px;">0</div></div><div style="left:1064px;top:298px;width:104px;height:25px;background:#fff;border-right:1px solid #c8c8c8;border-bottom:1px solid #c8c8c8"><div class="c" style="right:2px;top:6px;">3#cell-14</div></div><div style="left:1168px;top:298px;width:104px;height:25px;background:#fff;border-right:1px solid #c8c8c8;border-bottom:1px solid #c8c8c8"><div class="c" style="right:2px;top:6px;">3642</div></div><div style="left:208px;top:323px;width:24px;height:25px;background:#f0f0f0;border-top:1px solid #fff;border-left:1px solid #fff;border-right:1px solid #696969;border-bottom:1px solid #696969"><div class="c" style="right:2px;top:6px">4</div></div><div style="left:232px;top:323px;width:104px;height:25px;background:#fff;border-right:1px solid #c8c8c8;border-bottom:1px solid #c8c8c8"><div class="c" style="right:2px;top:6px;">1#cell-5</div></div><div style="left:336px;top:323px;width:104px;height:25px;background:#fff;border-right:1px solid #c8c8c8;border-bottom:1px solid #c8c8c8"><div class="c" style="right:2px;top:6px;">3639</div></div><div style="left:440px;top:323px;width:104px;height:25px;background:#fff;border-right:1px solid #c8c8c8;border-bottom:1px solid #c8c8c8"><div class="c" style="right:2px;top:6px;">DIS-9</div></div><div style="left:544px;top:323px;width:104px;height:25px;background:#fff;border-right:1px solid #c8c8c8;border-bottom:1px solid #c8c8c8"><div class="c" style="right:2px;top:6px;">0</div></div><div style="left:648px;top:323px;width:104px;height:25px;background:#fff;border-right:1px solid #c8c8c8;border-bottom:1px solid #c8c8c8"><div class="c" style="right:2px;top:6px;">2#cell-10</div></div><div style="left:752px;top:323px;width:104px;height:25px;background:#fff;border-right:1px solid #c8c8c8;border-bottom:1px solid #c8c8c8"><div class="c" style="right:2px;top:6px;">3638</div></div><div style="left:856px;top:323px;width:104px;height:25px;background:#fff;border-right:1px solid #c8c8c8;border-bottom:1px solid #c8c8c8"><div class="c" style="right:2px;top:6px;">DIS-14</div></div><div style="left:960px;top:323px;width:104px;height:25px;background:#fff;border-right:1px solid #c8c8c8;border-bottom:1px solid #c8c8c8"><div class="c" style="right:2px;top:6px;">0</div></div><div style="left:1064px;top:323px;width:104px;height:25px;background:#fff;border-right:1px solid #c8c8c8;border-bottom:1px solid #c8c8c8"><div class="c" style="right:2px;top:6px;">3#cell-15</div></div><div style="left:1168px;top:323px;width:104px;height:25px;background:#fff;border-right:1px solid #c8c8c8;border-bottom:1px solid #c8c8c8"><div class="c" style="right:2px;top:6px;">3642</div></div><div style="left:208px;top:348px;width:24px;height:25px;background:#f0f0f0;border-top:1px solid #fff;border-left:1px solid #fff;border-right:1px solid #696969;border-bottom:1px solid #696969"><div class="c" style="right:2px;top:6px">5</div></div><div style="left:232px;top:348px;width:104px;height:25px;background:#fff;border-right:1px solid #c8c8c8;border-bottom:1px solid #c8c8c8"><div class="c" style="right:2px;top:6px;">1#cell-6</div></div><div style="left:336px;top:348px;width:104px;height:25px;background:#fff;border-right:1px solid #c8c8c8;border-bottom:1px solid #c8c8c8"><div class="c" style="right:2px;top:6px;">3637</div></div><div style="left:440px;top:348px;width:104px;height:25px;background:#fff;border-right:1px solid #c8c8c8;border-bottom:1px solid #c8c8c8"><div class="c" style="right:2px;top:6px;">DIS-10</div></div><div style="left:544px;top:348px;width:104px;height:25px;background:#fff;border-right:1px solid #c8c8c8;border-bottom:1px solid #c8c8c8"><div class="c" style="right:2px;top:6px;">0</div></div><div style="left:648px;top:348px;width:104px;height:25px;background:#fff;border-right:1px solid #c8c8c8;border-bottom:1px solid #c8c8c8"><div class="c" style="right:2px;top:6px;">2#cell-11</div></div><div style="left:752px;top:348px;width:104px;height:25px;background:#fff;border-right:1px solid #c8c8c8;border-bottom:1px solid #c8c8c8"><div class="c" style="right:2px;top:6px;">3638</div></div><div style="left:856px;top:348px;width:104px;height:25px;background:#fff;border-right:1px solid #c8c8c8;border-bottom:1px solid #c8c8c8"><div class="c" style="right:2px;top:6px;">DIS-15</div></div><div style="left:960px;top:348px;width:104px;height:25px;background:#fff;border-right:1px solid #c8c8c8;border-bottom:1px solid #c8c8c8"><div class="c" style="right:2px;top:6px;">0</div></div><div style="left:1064px;top:348px;width:104px;height:25px;background:#fff;border-right:1px solid #c8c8c8;border-bottom:1px solid #c8c8c8"><div class="c" style="right:2px;top:6px;">3#cell-16</div></div><div style="left:1168px;top:348px;width:104px;height:25px;background:#fff;border-right:1px solid #c8c8c8;border-bottom:1px solid #c8c8c8"><div class="c" style="right:2px;top:6px;">3642</div></div><div style="left:208px;top:373px;width:24px;height:25px;background:#f0f0f0;border-top:1px solid #fff;border-left:1px solid #fff;border-right:1px solid #696969;border-bottom:1px solid #696969"><div class="c" style="right:2px;top:6px">6</div></div><div style="left:232px;top:373px;width:104px;height:25px;background:#fff;border-right:1px solid #c8c8c8;border-bottom:1px solid #c8c8c8"><div class="c" style="right:2px;top:6px;">1#cell-7</div></div><div style="left:336px;top:373px;width:104px;height:25px;background:#fff;border-right:1px solid #c8c8c8;border-bottom:1px solid #c8c8c8"><div class="c" style="right:2px;top:6px;">3639</div></div><div style="left:440px;top:373px;width:104px;height:25px;background:#fff;border-right:1px solid #c8c8c8;border-bottom:1px solid #c8c8c8"><div class="c" style="right:2px;top:6px;">DIS-11</div></div><div style="left:544px;top:373px;width:104px;height:25px;background:#fff;border-right:1px solid #c8c8c8;border-bottom:1px solid #c8c8c8"><div class="c" style="right:2px;top:6px;">0</div></div><div style="left:648px;top:373px;width:104px;height:25px;background:#fff;border-right:1px solid #c8c8c8;border-bottom:1px solid #c8c8c8"><div class="c" style="right:2px;top:6px;">2#cell-12</div></div><div style="left:752px;top:373px;width:104px;height:25px;background:#fff;border-right:1px solid #c8c8c8;border-bottom:1px solid #c8c8c8"><div class="c" style="right:2px;top:6px;">3639</div></div><div style="left:856px;top:373px;width:104px;height:25px;background:#fff;border-right:1px solid #c8c8c8;border-bottom:1px solid #c8c8c8"><div class="c" style="right:2px;top:6px;">DIS-16</div></div><div style="left:960px;top:373px;width:104px;height:25px;background:#fff;border-right:1px solid #c8c8c8;border-bottom:1px solid #c8c8c8"><div class="c" style="right:2px;top:6px;">0</div></div><div style="left:1064px;top:373px;width:104px;height:25px;background:#fff;border-right:1px solid #c8c8c8;border-bottom:1px solid #c8c8c8"><div class="c" style="right:2px;top:6px;">DIS-1</div></div><div style="left:1168px;top:373px;width:104px;height:25px;background:#fff;border-right:1px solid #c8c8c8;border-bottom:1px solid #c8c8c8"><div class="c" style="right:2px;top:6px;">0</div></div><div style="left:208px;top:398px;width:24px;height:25px;background:#f0f0f0;border-top:1px solid #fff;border-left:1px solid #fff;border-right:1px solid #696969;border-bottom:1px solid #696969"><div class="c" style="right:2px;top:6px">7</div></div><div style="left:232px;top:398px;width:104px;height:25px;background:#fff;border-right:1px solid #c8c8c8;border-bottom:1px solid #c8c8c8"><div class="c" style="right:2px;top:6px;">1#cell-8</div></div><div style="left:336px;top:398px;width:104px;height:25px;background:#fff;border-right:1px solid #c8c8c8;border-bottom:1px solid #c8c8c8"><div class="c" style="right:2px;top:6px;">3638</div></div><div style="left:440px;top:398px;width:104px;height:25px;background:#fff;border-right:1px solid #c8c8c8;border-bottom:1px solid #c8c8c8"><div class="c" style="right:2px;top:6px;">DIS-12</div></div><div style="left:544px;top:398px;width:104px;height:25px;background:#fff;border-right:1px solid #c8c8c8;border-bottom:1px solid #c8c8c8"><div class="c" style="right:2px;top:6px;">0</div></div><div style="left:648px;top:398px;width:104px;height:25px;background:#fff;border-right:1px solid #c8c8c8;border-bottom:1px solid #c8c8c8"><div class="c" style="right:2px;top:6px;">2#cell-13</div></div><div style="left:752px;top:398px;width:104px;height:25px;background:#fff;border-right:1px solid #c8c8c8;border-bottom:1px solid #c8c8c8"><div class="c" style="right:2px;top:6px;">3638</div></div><div style="left:856px;top:398px;width:104px;height:25px;background:#fff;border-right:1px solid #c8c8c8;border-bottom:1px solid #c8c8c8"><div class="c" style="right:2px;top:6px;">NTC-1</div></div><div style="left:960px;top:398px;width:104px;height:25px;background:#fff;border-right:1px solid #c8c8c8;border-bottom:1px solid #c8c8c8"><div class="c" style="right:2px;top:6px;">-32</div></div><div style="left:1064px;top:398px;width:104px;height:25px;background:#fff;border-right:1px solid #c8c8c8;border-bottom:1px solid #c8c8c8"><div class="c" style="right:2px;top:6px;">DIS-2</div></div><div style="left:1168px;top:398px;width:104px;height:25px;background:#fff;border-right:1px solid #c8c8c8;border-bottom:1px solid #c8c8c8"><div class="c" style="right:2px;top:6px;">0</div></div><div style="left:208px;top:423px;width:24px;height:25px;background:#f0f0f0;border-top:1px solid #fff;border-left:1px solid #fff;border-right:1px solid #696969;border-bottom:1px solid #696969"><div class="c" style="right:2px;top:6px">8</div></div><div style="left:232px;top:423px;width:104px;height:25px;background:#fff;border-right:1px solid #c8c8c8;border-bottom:1px solid #c8c8c8"><div class="c" style="right:2px;top:6px;">1#cell-9</div></div><div style="left:336px;top:423px;width:104px;height:25px;background:#fff;border-right:1px solid #c8c8c8;border-bottom:1px solid #c8c8c8"><div class="c" style="right:2px;top:6px;">3638</div></div><div style="left:440px;top:423px;width:104px;height:25px;background:#fff;border-right:1px solid #c8c8c8;border-bottom:1px solid #c8c8c8"><div class="c" style="right:2px;top:6px;">DIS-13</div></div><div style="left:544px;top:423px;width:104px;height:25px;background:#fff;border-right:1px solid #c8c8c8;border-bottom:1px solid #c8c8c8"><div class="c" style="right:2px;top:6px;">0</div></div><div style="left:648px;top:423px;width:104px;height:25px;background:#fff;border-right:1px solid #c8c8c8;border-bottom:1px solid #c8c8c8"><div class="c" style="right:2px;top:6px;">2#cell-14</div></div><div style="left:752px;top:423px;width:104px;height:25px;background:#fff;border-right:1px solid #c8c8c8;border-bottom:1px solid #c8c8c8"><div class="c" style="right:2px;top:6px;">3638</div></div><div style="left:856px;top:423px;width:104px;height:25px;background:#fff;border-right:1px solid #c8c8c8;border-bottom:1px solid #c8c8c8"><div class="c" style="right:2px;top:6px;">NTC-2</div></div><div style="left:960px;top:423px;width:104px;height:25px;background:#fff;border-right:1px solid #c8c8c8;border-bottom:1px solid #c8c8c8"><div class="c" style="right:2px;top:6px;">-32</div></div><div style="left:1064px;top:423px;width:104px;height:25px;background:#fff;border-right:1px solid #c8c8c8;border-bottom:1px solid #c8c8c8"><div class="c" style="right:2px;top:6px;">DIS-3</div></div><div style="left:1168px;top:423px;width:104px;height:25px;background:#fff;border-right:1px solid #c8c8c8;border-bottom:1px solid #c8c8c8"><div class="c" style="right:2px;top:6px;">0</div></div><div style="left:208px;top:448px;width:24px;height:25px;background:#f0f0f0;border-top:1px solid #fff;border-left:1px solid #fff;border-right:1px solid #696969;border-bottom:1px solid #696969"><div class="c" style="right:2px;top:6px">9</div></div><div style="left:232px;top:448px;width:104px;height:25px;background:#fff;border-right:1px solid #c8c8c8;border-bottom:1px solid #c8c8c8"><div class="c" style="right:2px;top:6px;">1#cell-10</div></div><div style="left:336px;top:448px;width:104px;height:25px;background:#fff;border-right:1px solid #c8c8c8;border-bottom:1px solid #c8c8c8"><div class="c" style="right:2px;top:6px;">3637</div></div><div style="left:440px;top:448px;width:104px;height:25px;background:#fff;border-right:1px solid #c8c8c8;border-bottom:1px solid #c8c8c8"><div class="c" style="right:2px;top:6px;">DIS-14</div></div><div style="left:544px;top:448px;width:104px;height:25px;background:#fff;border-right:1px solid #c8c8c8;border-bottom:1px solid #c8c8c8"><div class="c" style="right:2px;top:6px;">0</div></div><div style="left:648px;top:448px;width:104px;height:25px;background:#fff;border-right:1px solid #c8c8c8;border-bottom:1px solid #c8c8c8"><div class="c" style="right:2px;top:6px;">2#cell-15</div></div><div style="left:752px;top:448px;width:104px;height:25px;background:#fff;border-right:1px solid #c8c8c8;border-bottom:1px solid #c8c8c8"><div class="c" style="right:2px;top:6px;">3638</div></div><div style="left:856px;top:448px;width:104px;height:25px;background:#fff;border-right:1px solid #c8c8c8;border-bottom:1px solid #c8c8c8"><div class="c" style="right:2px;top:6px;">NTC-3</div></div><div style="left:960px;top:448px;width:104px;height:25px;background:#fff;border-right:1px solid #c8c8c8;border-bottom:1px solid #c8c8c8"><div class="c" style="right:2px;top:6px;">0</div></div><div style="left:1064px;top:448px;width:104px;height:25px;background:#fff;border-right:1px solid #c8c8c8;border-bottom:1px solid #c8c8c8"><div class="c" style="right:2px;top:6px;">DIS-4</div></div><div style="left:1168px;top:448px;width:104px;height:25px;background:#fff;border-right:1px solid #c8c8c8;border-bottom:1px solid #c8c8c8"><div class="c" style="right:2px;top:6px;">0</div></div><div style="left:208px;top:473px;width:24px;height:25px;background:#f0f0f0;border-top:1px solid #fff;border-left:1px solid #fff;border-right:1px solid #696969;border-bottom:1px solid #696969"><div class="c" style="right:2px;top:6px">10</div></div><div style="left:232px;top:473px;width:104px;height:25px;background:#fff;border-right:1px solid #c8c8c8;border-bottom:1px solid #c8c8c8"><div class="c" style="right:2px;top:6px;">1#cell-11</div></div><div style="left:336px;top:473px;width:104px;height:25px;background:#fff;border-right:1px solid #c8c8c8;border-bottom:1px solid #c8c8c8"><div class="c" style="right:2px;top:6px;">3639</div></div><div style="left:440px;top:473px;width:104px;height:25px;background:#fff;border-right:1px solid #c8c8c8;border-bottom:1px solid #c8c8c8"><div class="c" style="right:2px;top:6px;">DIS-15</div></div><div style="left:544px;top:473px;width:104px;height:25px;background:#fff;border-right:1px solid #c8c8c8;border-bottom:1px solid #c8c8c8"><div class="c" style="right:2px;top:6px;">0</div></div><div style="left:648px;top:473px;width:104px;height:25px;background:#fff;border-right:1px solid #c8c8c8;border-bottom:1px solid #c8c8c8"><div class="c" style="right:2px;top:6px;">2#cell-16</div></div><div style="left:752px;top:473px;width:104px;height:25px;background:#fff;border-right:1px solid #c8c8c8;border-bottom:1px solid #c8c8c8"><div class="c" style="right:2px;top:6px;">3640</div></div><div style="left:856px;top:473px;width:104px;height:25px;background:#fff;border-right:1px solid #c8c8c8;border-bottom:1px solid #c8c8c8"><div class="c" style="right:2px;top:6px;">3#cell-1</div></div><div style="left:960px;top:473px;width:104px;height:25px;background:#fff;border-right:1px solid #c8c8c8;border-bottom:1px solid #c8c8c8"><div class="c" style="right:2px;top:6px;">3640</div></div><div style="left:1064px;top:473px;width:104px;height:25px;background:#fff;border-right:1px solid #c8c8c8;border-bottom:1px solid #c8c8c8"><div class="c" style="right:2px;top:6px;">DIS-5</div></div><div style="left:1168px;top:473px;width:104px;height:25px;background:#fff;border-right:1px solid #c8c8c8;border-bottom:1px solid #c8c8c8"><div class="c" style="right:2px;top:6px;">0</div></div><div style="left:208px;top:498px;width:24px;height:25px;background:#f0f0f0;border-top:1px solid #fff;border-left:1px solid #fff;border-right:1px solid #696969;border-bottom:1px solid #696969"><div class="c" style="right:2px;top:6px">11</div></div><div style="left:232px;top:498px;width:104px;height:25px;background:#fff;border-right:1px solid #c8c8c8;border-bottom:1px solid #c8c8c8"><div class="c" style="right:2px;top:6px;">1#cell-12</div></div><div style="left:336px;top:498px;width:104px;height:25px;background:#fff;border-right:1px solid #c8c8c8;border-bottom:1px solid #c8c8c8"><div class="c" style="right:2px;top:6px;">3637</div></div><div style="left:440px;top:498px;width:104px;height:25px;background:#fff;border-right:1px solid #c8c8c8;border-bottom:1px solid #c8c8c8"><div class="c" style="right:2px;top:6px;">DIS-16</div></div><div style="left:544px;top:498px;width:104px;height:25px;background:#fff;border-right:1px solid #c8c8c8;border-bottom:1px solid #c8c8c8"><div class="c" style="right:2px;top:6px;">0</div></div><div style="left:648px;top:498px;width:104px;height:25px;background:#fff;border-right:1px solid #c8c8c8;border-bottom:1px solid #c8c8c8"><div class="c" style="right:2px;top:6px;">DIS-1</div></div><div style="left:752px;top:498px;width:104px;height:25px;background:#fff;border-right:1px solid #c8c8c8;border-bottom:1px solid #c8c8c8"><div class="c" style="right:2px;top:6px;">0</div></div><div style="left:856px;top:498px;width:104px;height:25px;background:#fff;border-right:1px solid #c8c8c8;border-bottom:1px solid #c8c8c8"><div class="c" style="right:2px;top:6px;">3#cell-2</div></div><div style="left:960px;top:498px;width:104px;height:25px;background:#fff;border-right:1px solid #c8c8c8;border-bottom:1px solid #c8c8c8"><div class="c" style="right:2px;top:6px;">3642</div></div><div style="left:1064px;top:498px;width:104px;height:25px;background:#fff;border-right:1px solid #c8c8c8;border-bottom:1px solid #c8c8c8"><div class="c" style="right:2px;top:6px;">DIS-6</div></div><div style="left:1168px;top:498px;width:104px;height:25px;background:#fff;border-right:1px solid #c8c8c8;border-bottom:1px solid #c8c8c8"><div class="c" style="right:2px;top:6px;">0</div></div><div style="left:208px;top:523px;width:24px;height:25px;background:#f0f0f0;border-top:1px solid #fff;border-left:1px solid #fff;border-right:1px solid #696969;border-bottom:1px solid #696969"><div class="c" style="right:2px;top:6px">12</div></div><div style="left:232px;top:523px;width:104px;height:25px;background:#fff;border-right:1px solid #c8c8c8;border-bottom:1px solid #c8c8c8"><div class="c" style="right:2px;top:6px;">1#cell-13</div></div><div style="left:336px;top:523px;width:104px;height:25px;background:#fff;border-right:1px solid #c8c8c8;border-bottom:1px solid #c8c8c8"><div class="c" style="right:2px;top:6px;">3638</div></div><div style="left:440px;top:523px;width:104px;height:25px;background:#fff;border-right:1px solid #c8c8c8;border-bottom:1px solid #c8c8c8"><div class="c" style="right:2px;top:6px;">NTC-1</div></div><div style="left:544px;top:523px;width:104px;height:25px;background:#fff;border-right:1px solid #c8c8c8;border-bottom:1px solid #c8c8c8"><div class="c" style="right:2px;top:6px;">264</div></div><div style="left:648px;top:523px;width:104px;height:25px;background:#fff;border-right:1px solid #c8c8c8;border-bottom:1px solid #c8c8c8"><div class="c" style="right:2px;top:6px;">DIS-2</div></div><div style="left:752px;top:523px;width:104px;height:25px;background:#fff;border-right:1px solid #c8c8c8;border-bottom:1px solid #c8c8c8"><div class="c" style="right:2px;top:6px;">0</div></div><div style="left:856px;top:523px;width:104px;height:25px;background:#fff;border-right:1px solid #c8c8c8;border-bottom:1px solid #c8c8c8"><div class="c" style="right:2px;top:6px;">3#cell-3</div></div><div style="left:960px;top:523px;width:104px;height:25px;background:#fff;border-right:1px solid #c8c8c8;border-bottom:1px solid #c8c8c8"><div class="c" style="right:2px;top:6px;">3642</div></div><div style="left:1064px;top:523px;width:104px;height:25px;background:#fff;border-right:1px solid #c8c8c8;border-bottom:1px solid #c8c8c8"><div class="c" style="right:2px;top:6px;">DIS-7</div></div><div style="left:1168px;top:523px;width:104px;height:25px;background:#fff;border-right:1px solid #c8c8c8;border-bottom:1px solid #c8c8c8"><div class="c" style="right:2px;top:6px;">0</div></div><div style="left:208px;top:548px;width:24px;height:25px;background:#f0f0f0;border-top:1px solid #fff;border-left:1px solid #fff;border-right:1px solid #696969;border-bottom:1px solid #696969"><div class="c" style="right:2px;top:6px">13</div></div><div style="left:232px;top:548px;width:104px;height:25px;background:#fff;border-right:1px solid #c8c8c8;border-bottom:1px solid #c8c8c8"><div class="c" style="right:2px;top:6px;">1#cell-14</div></div><div style="left:336px;top:548px;width:104px;height:25px;background:#fff;border-right:1px solid #c8c8c8;border-bottom:1px solid #c8c8c8"><div class="c" style="right:2px;top:6px;">3638</div></div><div style="left:440px;top:548px;width:104px;height:25px;background:#fff;border-right:1px solid #c8c8c8;border-bottom:1px solid #c8c8c8"><div class="c" style="right:2px;top:6px;">NTC-2</div></div><div style="left:544px;top:548px;width:104px;height:25px;background:#fff;border-right:1px solid #c8c8c8;border-bottom:1px solid #c8c8c8"><div class="c" style="right:2px;top:6px;">264</div></div><div style="left:648px;top:548px;width:104px;height:25px;background:#fff;border-right:1px solid #c8c8c8;border-bottom:1px solid #c8c8c8"><div class="c" style="right:2px;top:6px;">DIS-3</div></div><div style="left:752px;top:548px;width:104px;height:25px;background:#fff;border-right:1px solid #c8c8c8;border-bottom:1px solid #c8c8c8"><div class="c" style="right:2px;top:6px;">0</div></div><div style="left:856px;top:548px;width:104px;height:25px;background:#fff;border-right:1px solid #c8c8c8;border-bottom:1px solid #c8c8c8"><div class="c" style="right:2px;top:6px;">3#cell-4</div></div><div style="left:960px;top:548px;width:104px;height:25px;background:#fff;border-right:1px solid #c8c8c8;border-bottom:1px solid #c8c8c8"><div class="c" style="right:2px;top:6px;">3642</div></div><div style="left:1064px;top:548px;width:104px;height:25px;background:#fff;border-right:1px solid #c8c8c8;border-bottom:1px solid #c8c8c8"><div class="c" style="right:2px;top:6px;">DIS-8</div></div><div style="left:1168px;top:548px;width:104px;height:25px;background:#fff;border-right:1px solid #c8c8c8;border-bottom:1px solid #c8c8c8"><div class="c" style="right:2px;top:6px;">0</div></div><div style="left:208px;top:573px;width:24px;height:25px;background:#f0f0f0;border-top:1px solid #fff;border-left:1px solid #fff;border-right:1px solid #696969;border-bottom:1px solid #696969"><div class="c" style="right:2px;top:6px">14</div></div><div style="left:232px;top:573px;width:104px;height:25px;background:#fff;border-right:1px solid #c8c8c8;border-bottom:1px solid #c8c8c8"><div class="c" style="right:2px;top:6px;">1#cell-15</div></div><div style="left:336px;top:573px;width:104px;height:25px;background:#fff;border-right:1px solid #c8c8c8;border-bottom:1px solid #c8c8c8"><div class="c" style="right:2px;top:6px;">3639</div></div><div style="left:440px;top:573px;width:104px;height:25px;background:#fff;border-right:1px solid #c8c8c8;border-bottom:1px solid #c8c8c8"><div class="c" style="right:2px;top:6px;">NTC-3</div></div><div style="left:544px;top:573px;width:104px;height:25px;background:#fff;border-right:1px solid #c8c8c8;border-bottom:1px solid #c8c8c8"><div class="c" style="right:2px;top:6px;">0</div></div><div style="left:648px;top:573px;width:104px;height:25px;background:#fff;border-right:1px solid #c8c8c8;border-bottom:1px solid #c8c8c8"><div class="c" style="right:2px;top:6px;">DIS-4</div></div><div style="left:752px;top:573px;width:104px;height:25px;background:#fff;border-right:1px solid #c8c8c8;border-bottom:1px solid #c8c8c8"><div class="c" style="right:2px;top:6px;">0</div></div><div style="left:856px;top:573px;width:104px;height:25px;background:#fff;border-right:1px solid #c8c8c8;border-bottom:1px solid #c8c8c8"><div class="c" style="right:2px;top:6px;">3#cell-5</div></div><div style="left:960px;top:573px;width:104px;height:25px;background:#fff;border-right:1px solid #c8c8c8;border-bottom:1px solid #c8c8c8"><div class="c" style="right:2px;top:6px;">3643</div></div><div style="left:1064px;top:573px;width:104px;height:25px;background:#fff;border-right:1px solid #c8c8c8;border-bottom:1px solid #c8c8c8"><div class="c" style="right:2px;top:6px;">DIS-9</div></div><div style="left:1168px;top:573px;width:104px;height:25px;background:#fff;border-right:1px solid #c8c8c8;border-bottom:1px solid #c8c8c8"><div class="c" style="right:2px;top:6px;">0</div></div><div style="left:208px;top:598px;width:24px;height:25px;background:#f0f0f0;border-top:1px solid #fff;border-left:1px solid #fff;border-right:1px solid #696969;border-bottom:1px solid #696969"><div class="c" style="right:2px;top:6px">15</div></div><div style="left:232px;top:598px;width:104px;height:25px;background:#fff;border-right:1px solid #c8c8c8;border-bottom:1px solid #c8c8c8"><div class="c" style="right:2px;top:6px;">1#cell-16</div></div><div style="left:336px;top:598px;width:104px;height:25px;background:#fff;border-right:1px solid #c8c8c8;border-bottom:1px solid #c8c8c8"><div class="c" style="right:2px;top:6px;">3639</div></div><div style="left:440px;top:598px;width:104px;height:25px;background:#fff;border-right:1px solid #c8c8c8;border-bottom:1px solid #c8c8c8"><div class="c" style="right:2px;top:6px;">2#cell-1</div></div><div style="left:544px;top:598px;width:104px;height:25px;background:#fff;border-right:1px solid #c8c8c8;border-bottom:1px solid #c8c8c8"><div class="c" style="right:2px;top:6px;">3638</div></div><div style="left:648px;top:598px;width:104px;height:25px;background:#fff;border-right:1px solid #c8c8c8;border-bottom:1px solid #c8c8c8"><div class="c" style="right:2px;top:6px;">DIS-5</div></div><div style="left:752px;top:598px;width:104px;height:25px;background:#fff;border-right:1px solid #c8c8c8;border-bottom:1px solid #c8c8c8"><div class="c" style="right:2px;top:6px;">0</div></div><div style="left:856px;top:598px;width:104px;height:25px;background:#fff;border-right:1px solid #c8c8c8;border-bottom:1px solid #c8c8c8"><div class="c" style="right:2px;top:6px;">3#cell-6</div></div><div style="left:960px;top:598px;width:104px;height:25px;background:#fff;border-right:1px solid #c8c8c8;border-bottom:1px solid #c8c8c8"><div class="c" style="right:2px;top:6px;">3642</div></div><div style="left:1064px;top:598px;width:104px;height:25px;background:#fff;border-right:1px solid #c8c8c8;border-bottom:1px solid #c8c8c8"><div class="c" style="right:2px;top:6px;">DIS-10</div></div><div style="left:1168px;top:598px;width:104px;height:25px;background:#fff;border-right:1px solid #c8c8c8;border-bottom:1px solid #c8c8c8"><div class="c" style="right:2px;top:6px;">0</div></div><div style="left:208px;top:623px;width:24px;height:25px;background:#f0f0f0;border-top:1px solid #fff;border-left:1px solid #fff;border-right:1px solid #696969;border-bottom:1px solid #696969"><div class="c" style="right:2px;top:6px">16</div></div><div style="left:232px;top:623px;width:104px;height:25px;background:#fff;border-right:1px solid #c8c8c8;border-bottom:1px solid #c8c8c8"><div class="c" style="right:2px;top:6px;">DIS-1</div></div><div style="left:336px;top:623px;width:104px;height:25px;background:#fff;border-right:1px solid #c8c8c8;border-bottom:1px solid #c8c8c8"><div class="c" style="right:2px;top:6px;">0</div></div><div style="left:440px;top:623px;width:104px;height:25px;background:#fff;border-right:1px solid #c8c8c8;border-bottom:1px solid #c8c8c8"><div class="c" style="right:2px;top:6px;">2#cell-2</div></div><div style="left:544px;top:623px;width:104px;height:25px;background:#fff;border-right:1px solid #c8c8c8;border-bottom:1px solid #c8c8c8"><div class="c" style="right:2px;top:6px;">3638</div></div><div style="left:648px;top:623px;width:104px;height:25px;background:#fff;border-right:1px solid #c8c8c8;border-bottom:1px solid #c8c8c8"><div class="c" style="right:2px;top:6px;">DIS-6</div></div><div style="left:752px;top:623px;width:104px;height:25px;background:#fff;border-right:1px solid #c8c8c8;border-bottom:1px solid #c8c8c8"><div class="c" style="right:2px;top:6px;">0</div></div><div style="left:856px;top:623px;width:104px;height:25px;background:#fff;border-right:1px solid #c8c8c8;border-bottom:1px solid #c8c8c8"><div class="c" style="right:2px;top:6px;">3#cell-7</div></div><div style="left:960px;top:623px;width:104px;height:25px;background:#fff;border-right:1px solid #c8c8c8;border-bottom:1px solid #c8c8c8"><div class="c" style="right:2px;top:6px;">3642</div></div><div style="left:1064px;top:623px;width:104px;height:25px;background:#fff;border-right:1px solid #c8c8c8;border-bottom:1px solid #c8c8c8"><div class="c" style="right:2px;top:6px;">DIS-11</div></div><div style="left:1168px;top:623px;width:104px;height:25px;background:#fff;border-right:1px solid #c8c8c8;border-bottom:1px solid #c8c8c8"><div class="c" style="right:2px;top:6px;">0</div></div><div style="left:208px;top:648px;width:24px;height:25px;background:#f0f0f0;border-top:1px solid #fff;border-left:1px solid #fff;border-right:1px solid #696969;border-bottom:1px solid #696969"><div class="c" style="right:2px;top:6px">17</div></div><div style="left:232px;top:648px;width:104px;height:25px;background:#fff;border-right:1px solid #c8c8c8;border-bottom:1px solid #c8c8c8"><div class="c" style="right:2px;top:6px;">DIS-2</div></div><div style="left:336px;top:648px;width:104px;height:25px;background:#fff;border-right:1px solid #c8c8c8;border-bottom:1px solid #c8c8c8"><div class="c" style="right:2px;top:6px;">0</div></div><div style="left:440px;top:648px;width:104px;height:25px;background:#fff;border-right:1px solid #c8c8c8;border-bottom:1px solid #c8c8c8"><div class="c" style="right:2px;top:6px;">2#cell-3</div></div><div style="left:544px;top:648px;width:104px;height:25px;background:#fff;border-right:1px solid #c8c8c8;border-bottom:1px solid #c8c8c8"><div class="c" style="right:2px;top:6px;">3639</div></div><div style="left:648px;top:648px;width:104px;height:25px;background:#fff;border-right:1px solid #c8c8c8;border-bottom:1px solid #c8c8c8"><div class="c" style="right:2px;top:6px;">DIS-7</div></div><div style="left:752px;top:648px;width:104px;height:25px;background:#fff;border-right:1px solid #c8c8c8;border-bottom:1px solid #c8c8c8"><div class="c" style="right:2px;top:6px;">0</div></div><div style="left:856px;top:648px;width:104px;height:25px;background:#fff;border-right:1px solid #c8c8c8;border-bottom:1px solid #c8c8c8"><div class="c" style="right:2px;top:6px;">3#cell-8</div></div><div style="left:960px;top:648px;width:104px;height:25px;background:#fff;border-right:1px solid #c8c8c8;border-bottom:1px solid #c8c8c8"><div class="c" style="right:2px;top:6px;">3642</div></div><div style="left:1064px;top:648px;width:104px;height:25px;background:#fff;border-right:1px solid #c8c8c8;border-bottom:1px solid #c8c8c8"><div class="c" style="right:2px;top:6px;">DIS-12</div></div><div style="left:1168px;top:648px;width:104px;height:25px;background:#fff;border-right:1px solid #c8c8c8;border-bottom:1px solid #c8c8c8"><div class="c" style="right:2px;top:6px;">0</div></div><div style="left:208px;top:673px;width:24px;height:25px;background:#f0f0f0;border-top:1px solid #fff;border-left:1px solid #fff;border-right:1px solid #696969;border-bottom:1px solid #696969"><div class="c" style="right:2px;top:6px">18</div></div><div style="left:232px;top:673px;width:104px;height:25px;background:#fff;border-right:1px solid #c8c8c8;border-bottom:1px solid #c8c8c8"><div class="c" style="right:2px;top:6px;">DIS-3</div></div><div style="left:336px;top:673px;width:104px;height:25px;background:#fff;border-right:1px solid #c8c8c8;border-bottom:1px solid #c8c8c8"><div class="c" style="right:2px;top:6px;">0</div></div><div style="left:440px;top:673px;width:104px;height:25px;background:#fff;border-right:1px solid #c8c8c8;border-bottom:1px solid #c8c8c8"><div class="c" style="right:2px;top:6px;">2#cell-4</div></div><div style="left:544px;top:673px;width:104px;height:25px;background:#fff;border-right:1px solid #c8c8c8;border-bottom:1px solid #c8c8c8"><div class="c" style="right:2px;top:6px;">3638</div></div><div style="left:648px;top:673px;width:104px;height:25px;background:#fff;border-right:1px solid #c8c8c8;border-bottom:1px solid #c8c8c8"><div class="c" style="right:2px;top:6px;">DIS-8</div></div><div style="left:752px;top:673px;width:104px;height:25px;background:#fff;border-right:1px solid #c8c8c8;border-bottom:1px solid #c8c8c8"><div class="c" style="right:2px;top:6px;">0</div></div><div style="left:856px;top:673px;width:104px;height:25px;background:#fff;border-right:1px solid #c8c8c8;border-bottom:1px solid #c8c8c8"><div class="c" style="right:2px;top:6px;">3#cell-9</div></div><div style="left:960px;top:673px;width:104px;height:25px;background:#fff;border-right:1px solid #c8c8c8;border-bottom:1px solid #c8c8c8"><div class="c" style="right:2px;top:6px;">3642</div></div><div style="left:1064px;top:673px;width:104px;height:25px;background:#fff;border-right:1px solid #c8c8c8;border-bottom:1px solid #c8c8c8"><div class="c" style="right:2px;top:6px;">DIS-13</div></div><div style="left:1168px;top:673px;width:104px;height:25px;background:#fff;border-right:1px solid #c8c8c8;border-bottom:1px solid #c8c8c8"><div class="c" style="right:2px;top:6px;">0</div></div><div style="left:208px;top:698px;width:24px;height:25px;background:#f0f0f0;border-top:1px solid #fff;border-left:1px solid #fff;border-right:1px solid #696969;border-bottom:1px solid #696969"><div class="c" style="right:2px;top:6px">19</div></div><div style="left:232px;top:698px;width:104px;height:25px;background:#fff;border-right:1px solid #c8c8c8;border-bottom:1px solid #c8c8c8"><div class="c" style="right:2px;top:6px;">DIS-4</div></div><div style="left:336px;top:698px;width:104px;height:25px;background:#fff;border-right:1px solid #c8c8c8;border-bottom:1px solid #c8c8c8"><div class="c" style="right:2px;top:6px;">0</div></div><div style="left:440px;top:698px;width:104px;height:25px;background:#fff;border-right:1px solid #c8c8c8;border-bottom:1px solid #c8c8c8"><div class="c" style="right:2px;top:6px;">2#cell-5</div></div><div style="left:544px;top:698px;width:104px;height:25px;background:#fff;border-right:1px solid #c8c8c8;border-bottom:1px solid #c8c8c8"><div class="c" style="right:2px;top:6px;">3638</div></div><div style="left:648px;top:698px;width:104px;height:25px;background:#fff;border-right:1px solid #c8c8c8;border-bottom:1px solid #c8c8c8"><div class="c" style="right:2px;top:6px;">DIS-9</div></div><div style="left:752px;top:698px;width:104px;height:25px;background:#fff;border-right:1px solid #c8c8c8;border-bottom:1px solid #c8c8c8"><div class="c" style="right:2px;top:6px;">0</div></div><div style="left:856px;top:698px;width:104px;height:25px;background:#fff;border-right:1px solid #c8c8c8;border-bottom:1px solid #c8c8c8"><div class="c" style="right:2px;top:6px;">3#cell-10</div></div><div style="left:960px;top:698px;width:104px;height:25px;background:#fff;border-right:1px solid #c8c8c8;border-bottom:1px solid #c8c8c8"><div class="c" style="right:2px;top:6px;">3642</div></div><div style="left:1064px;top:698px;width:104px;height:25px;background:#fff;border-right:1px solid #c8c8c8;border-bottom:1px solid #c8c8c8"><div class="c" style="right:2px;top:6px;">DIS-14</div></div><div style="left:1168px;top:698px;width:104px;height:25px;background:#fff;border-right:1px solid #c8c8c8;border-bottom:1px solid #c8c8c8"><div class="c" style="right:2px;top:6px;">0</div></div></div></div></div>
<div style="left:8px;top:791px;width:1533px;height:20px;background:#f0f0f0;border-top:1px solid #dcdcdc;border-bottom:1px solid #a0a0a0"></div>
<div class="t" style="left:10px;top:795px;font-size:12.5px;color:#000">For Help, press F1.</div>
<div style="left:1213px;top:793px;width:1px;height:16px;background:#d0d0d0"></div>
<div style="left:1521px;top:793px;width:1px;height:16px;background:#d0d0d0"></div>
<div class="t" style="left:1218px;top:795px;font-size:12.5px;color:#000">[192.168.0.100]: 502</div>
<svg width="10" height="10" shape-rendering="crispEdges" style="left:1531px;top:800px"><path d="M6 0h2v2h-2zM3 3h2v2h-2zM6 3h2v2h-2zM0 6h2v2h-2zM3 6h2v2h-2zM6 6h2v2h-2z" fill="#a8a8a8"/></svg>
<div style="left:1541px;top:51px;width:8px;height:760px;background:linear-gradient(90deg,#c4c4c4,#e2e2e2 4px,#ececec)"></div>
<div style="left:1541px;top:798px;width:8px;height:1px;background:#b8b8b8"></div>
</body></html>
